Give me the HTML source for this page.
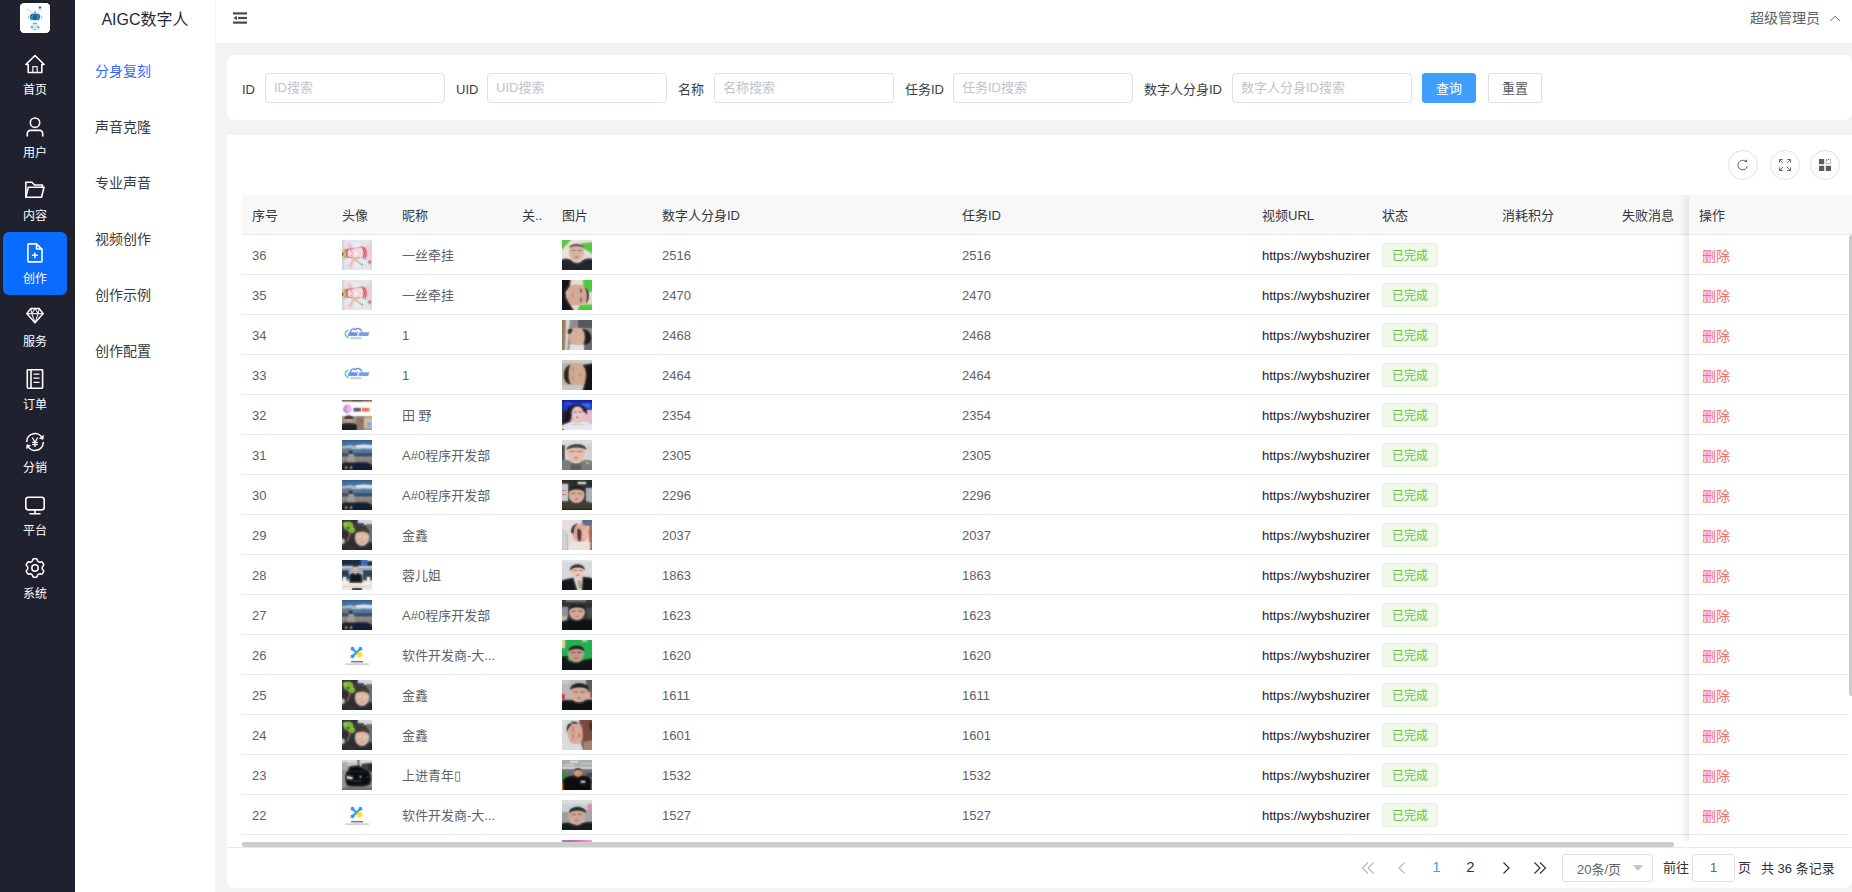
<!DOCTYPE html>
<html lang="zh-CN"><head><meta charset="utf-8"><title>AIGC数字人</title>
<style>
*{box-sizing:border-box;margin:0;padding:0}
html,body{width:1852px;height:892px;overflow:hidden;background:#f2f3f5;font-family:"Liberation Sans","Noto Sans CJK SC",sans-serif;font-size:13px;color:#606266}
body{position:relative}
.side{position:absolute;left:0;top:0;width:75px;height:892px;background:#1f222e}
.logo{position:absolute;left:20px;top:3px;width:30px;height:30px;background:#fff;border-radius:4.500px;overflow:hidden}
.logo svg{display:block}
.nav{position:absolute;left:3px;width:64px;height:63px;border-radius:6px;color:#fff;text-align:center}
.nav.act{background:#0a6cff}
.nav svg{position:absolute;left:22px;top:11px;width:20px;height:20px}
.nav span{position:absolute;left:0;width:64px;top:38px;font-size:12px;line-height:18px;color:#fff}
.sub{position:absolute;left:75px;top:0;width:141px;height:892px;background:#fff;border-right:1px solid #f2f3f5}
.subtitle{position:absolute;left:0;top:0;width:140px;height:40px;line-height:40px;text-align:center;font-size:16px;color:#1d2939}
.subitem{position:absolute;left:20px;width:120px;height:56px;line-height:56px;font-size:14px;color:#393b40}
.subitem.on{color:#3366ff}
.head{position:absolute;left:216px;top:0;width:1636px;height:43px;background:#fff}
.head>svg{position:absolute;left:17px;top:11px;width:14px;height:14px}
.user{position:absolute;right:32px;top:0;height:36px;line-height:36px;font-size:14px;color:#5c5e63}
.user svg{position:absolute;left:80px;top:12px;width:12px;height:12px}
.search{position:absolute;left:227px;top:55px;width:1625px;height:65px;background:#fff;border-radius:8px}
.search label{position:absolute;top:19px;height:32px;line-height:32px;font-size:13px;color:#3c3e42;white-space:nowrap}
.inp{position:absolute;top:18px;width:180px;height:30px;border:1px solid #dcdfe6;border-radius:4px;background:#fff}
.inp span{position:absolute;left:8px;top:0;line-height:28px;font-size:13px;color:#c0c4cc;white-space:nowrap}
.btn{position:absolute;top:18px;width:54px;height:30px;border:1px solid #dcdfe6;border-radius:3px;background:#fff;color:#5a5c61;font-size:13px;line-height:30px;text-align:center}
.btn.pri{background:#409eff;border-color:#409eff;color:#fff}
.card{position:absolute;left:227px;top:135px;width:1625px;height:753px;background:#fff;border-radius:0 0 8px 8px;overflow:hidden}
.tool{position:absolute;top:15px;width:30px;height:30px;border:1px solid #dcdfe6;border-radius:50%}
.tool svg{position:absolute;left:8px;top:8px;width:12px;height:12px}
.tbl{position:absolute;left:15px;top:60px;width:1618px;height:647px;overflow:hidden}
.thead{position:absolute;left:0;top:0;width:1618px;height:40px;background:#f8f8f9;border-bottom:1px solid #e6e9ee}
.thead span{position:absolute;top:1px;line-height:39px;font-size:13px;color:#34363a;white-space:nowrap}
.tr{position:absolute;left:0;width:1618px;height:40px;border-bottom:1px solid #e6e9ee}
.tr .c{position:absolute;top:1px;line-height:40px;font-size:13px;color:#606266;white-space:nowrap}
.tr .url{width:108px;overflow:hidden;color:#17171f}
.th{position:absolute;top:5px;width:30px;height:30px;overflow:hidden}
.th svg{display:block;width:30px;height:30px}
.tag{position:absolute;top:8px;width:56px;height:24px;line-height:25px;border:1px solid #e1f3d8;background:#f0f9eb;border-radius:3px;color:#67c23a;font-size:12px;text-align:center}
.fix{position:absolute;left:1462px;top:60px;width:171px;height:647px;background:#fff;box-shadow:-2px 0 9px rgba(0,0,0,.13);clip-path:inset(0 0 0 -14px)}
.fhead{position:absolute;left:0;top:0;width:171px;height:40px;background:#f8f8f9;border-bottom:1px solid #e6e9ee;line-height:41px;padding-left:10px;font-size:13px;color:#34363a}
.fr{position:absolute;left:0;width:160px;height:40px;border-bottom:1px solid #e6e9ee}
.fr span{position:absolute;left:13px;top:0;line-height:42px;font-size:14px;color:#f56c6c}
.vbar{position:absolute;left:1622px;top:100px;width:6px;height:461px;background:#cbcbcb;border-radius:3px}
.hbar{position:absolute;left:0;top:706px;width:1625px;height:7px;border-bottom:1px solid #e6e9ee}
.hbar i{position:absolute;left:15px;top:1px;width:1432px;height:5px;background:#cccccc;border-radius:3px}
.pager{position:absolute;left:0;top:714px;width:1633px;height:39px}
.pg{position:absolute;top:5px;width:17px;height:28px;line-height:26px;font-size:15px;color:#303133;text-align:center}
.pg.cur{color:#409eff}
.pg.ico svg{position:absolute;left:2px;top:7px;width:14px;height:14px;stroke:#b4b7bd}
.pg.ico.dk svg{stroke:#303133}
.sel{position:absolute;top:5px;width:91px;height:28px;border:1px solid #dcdfe6;border-radius:3px}
.sel span{position:absolute;left:14px;top:1px;line-height:28px;font-size:13px;color:#606266}
.sel b{position:absolute;left:70px;top:10px;width:0;height:0;border:5px solid transparent;border-top:6px solid #c0c4cc}
.pt{position:absolute;top:5px;line-height:28px;font-size:13px;color:#303133;white-space:nowrap}
.jump{position:absolute;top:5px;width:43px;height:28px;border:1px solid #dcdfe6;border-radius:3px;text-align:center;line-height:25px;font-size:13px;color:#606266}

</style></head><body>
<svg width="0" height="0" style="position:absolute"><defs><filter id="bl" x="-20%" y="-20%" width="140%" height="140%"><feGaussianBlur stdDeviation="0.85"/></filter><filter id="bl2" x="-20%" y="-20%" width="140%" height="140%"><feGaussianBlur stdDeviation="0.3"/></filter></defs></svg>
<div class="side">
<div class="logo"><svg viewBox="0 0 30 30" width="30" height="30"><rect width="30" height="30" fill="#ffffff"/><g filter="url(#bl2)"><path d="M7.500 6.300 10.800 8.700" stroke="#a8cde8" stroke-width="1" fill="none" stroke-linecap="round"/><path d="M18.600 8.500 19.700 5.500" stroke="#b8dcec" stroke-width=".8" fill="none"/><path d="M18.800 7.600h3.800" stroke="#c4e4f0" stroke-width=".8" fill="none"/><circle cx="20" cy="4.500" r="1.700" fill="#bfeaf2"/><circle cx="20" cy="4.600" r="1.100" fill="#2a4f96"/><rect x="9.300" y="9.600" width="11.400" height="8.600" rx="3.800" fill="#d4ecf3"/><circle cx="15" cy="9.300" r="1.150" fill="#2ec4d8"/><rect x="8" y="12.600" width="1" height="3" rx=".5" fill="#7ad8e8"/><rect x="21" y="12.600" width="1" height="3" rx=".5" fill="#7ad8e8"/><rect x="10.100" y="10.800" width="9.800" height="6.200" rx="2.800" fill="#275889"/><rect x="12.200" y="10.900" width="5.600" height="1.400" rx=".7" fill="#3c62a4"/><path d="M13.300 12.800h-1.400v3h1.400M16.700 12.800h1.400v3h-1.400" stroke="#3acbdc" stroke-width=".8" fill="none"/><ellipse cx="15" cy="18.400" rx="1.400" ry=".7" fill="#d8eef4"/><ellipse cx="15" cy="22.600" rx="3.700" ry="3.200" fill="#cfeaf2"/><rect x="13" y="19.800" width="4" height="1.300" rx=".6" fill="#74acc8"/><circle cx="11.800" cy="24.300" r="1.200" fill="#39bfd0"/><circle cx="18.300" cy="24.300" r="1.200" fill="#39bfd0"/><ellipse cx="15" cy="26.500" rx="1.300" ry=".75" fill="#33c4d6"/></g></svg></div>
<div class="nav" style="top:43px"><svg viewBox="0 0 20 20" fill="none" stroke="#fff" stroke-width="1.6" stroke-linecap="round" stroke-linejoin="round"><path d="M10 1.500 0.9 10.500H3.200V18.500H16.800V10.500H19.100z"/><path d="M7.800 18.500V12.600h4.400v5.900" stroke-width="1.300" stroke="#e4e5e8"/></svg><span>首页</span></div>
<div class="nav" style="top:106px"><svg viewBox="0 0 20 20" fill="none" stroke="#fff" stroke-width="1.6" stroke-linecap="round" stroke-linejoin="round"><circle cx="10" cy="5.700" r="4.700"/><path d="M2.300 19v-2.600a3 3 0 0 1 3-3h9.400a3 3 0 0 1 3 3V19"/></svg><span>用户</span></div>
<div class="nav" style="top:169px"><svg viewBox="0 0 20 20" fill="none" stroke="#fff" stroke-width="1.6" stroke-linecap="round" stroke-linejoin="round"><path d="M0.800 17.300V2.200H7L9.500 5h8V7.200"/><path d="M0.800 17.300 3.300 7.200H19L16.500 17.300z"/></svg><span>内容</span></div>
<div class="nav act" style="top:232px"><svg viewBox="0 0 20 20" fill="none" stroke="#fff" stroke-width="1.6" stroke-linecap="round" stroke-linejoin="round"><path d="M3.800 0.900h7.600L17 6.300V18a.9.9 0 0 1-.9.900H3.800a.9.900 0 0 1-.9-.9V1.800a.9.900 0 0 1 .9-.9z"/><path d="M11.500 1V6h5.300"/><path d="M9.900 9.900v4.800M7.500 12.300h4.800" stroke-width="1.400"/></svg><span>创作</span></div>
<div class="nav" style="top:295px"><svg viewBox="0 0 20 20" fill="none" stroke="#fff" stroke-width="1.2" stroke-linecap="round" stroke-linejoin="round"><path d="M5.900 2.500h8.200L18.200 7.600 10 16.800 1.800 7.600z" stroke-width="1.500"/><path d="M1.800 7.600h16.400M6.800 7.600 10 16.800 13.200 7.600M5.900 2.500 6.800 7.600 10 2.500 13.200 7.600 14.100 2.500" stroke-width="1.100" opacity=".88"/></svg><span>服务</span></div>
<div class="nav" style="top:358px"><svg viewBox="0 0 20 20" fill="none" stroke="#fff" stroke-width="1.6" stroke-linecap="round" stroke-linejoin="round"><rect x="2.300" y="0.700" width="15.300" height="18.500" rx="1"/><path d="M6 0.700V19.200"/><path d="M9 5.100h5M9 9.200h5M9 13.400h5" stroke-width="1.300"/></svg><span>订单</span></div>
<div class="nav" style="top:421px"><svg viewBox="0 0 20 20" fill="none" stroke="#fff" stroke-width="1.6" stroke-linecap="round" stroke-linejoin="round"><path d="M1.700 9.500A8.300 8.300 0 0 1 17.700 6.800"/><path d="M18.300 10.500A8.300 8.300 0 0 1 2.300 13.200"/><path d="M18.400 3.800 17.900 7 14.900 6.500z" fill="#fff" stroke-width=".8"/><path d="M1.600 16.200 2.100 13 5.100 13.500z" fill="#fff" stroke-width=".8"/><path d="M7.500 6 10 10 12.500 6M10 10v4.500M7.700 10.500h4.600M7.700 12.600h4.600" stroke-width="1.300"/></svg><span>分销</span></div>
<div class="nav" style="top:484px"><svg viewBox="0 0 20 20" fill="none" stroke="#fff" stroke-width="1.6" stroke-linecap="round" stroke-linejoin="round"><rect x="0.800" y="2.200" width="18.400" height="12.700" rx="2.600"/><path d="M10 15v3.700M5 18.800h10"/></svg><span>平台</span></div>
<div class="nav" style="top:547px"><svg viewBox="0 0 20 20" fill="none" stroke="#fff" stroke-width="1.5" stroke-linecap="round" stroke-linejoin="round"><circle cx="10" cy="10" r="3.200"/><path d="M17.24 10.00 17.24 9.68 17.24 9.37 17.29 9.04 17.47 8.68 17.90 8.25 18.44 7.74 18.69 7.26 18.68 6.84 18.57 6.45 18.42 6.07 18.24 5.71 18.05 5.35 17.84 5.01 17.61 4.67 17.36 4.35 17.08 4.06 16.71 3.85 16.18 3.82 15.47 4.03 14.87 4.19 14.48 4.17 14.17 4.04 13.89 3.89 13.62 3.73 13.35 3.57 13.07 3.41 12.81 3.21 12.59 2.87 12.43 2.28 12.26 1.56 11.97 1.11 11.60 0.90 11.21 0.80 10.81 0.75 10.41 0.71 10.00 0.71 9.59 0.71 9.19 0.75 8.79 0.80 8.40 0.90 8.03 1.11 7.74 1.56 7.57 2.28 7.41 2.87 7.19 3.21 6.93 3.41 6.65 3.57 6.38 3.73 6.11 3.89 5.83 4.04 5.52 4.17 5.13 4.19 4.53 4.03 3.82 3.82 3.29 3.85 2.92 4.06 2.64 4.35 2.39 4.67 2.16 5.01 1.95 5.35 1.76 5.71 1.58 6.07 1.43 6.45 1.32 6.84 1.31 7.26 1.56 7.74 2.10 8.25 2.53 8.68 2.71 9.04 2.76 9.37 2.76 9.68 2.76 10.00 2.76 10.32 2.76 10.63 2.71 10.96 2.53 11.32 2.10 11.75 1.56 12.26 1.31 12.74 1.32 13.16 1.43 13.55 1.58 13.93 1.76 14.29 1.95 14.65 2.16 14.99 2.39 15.33 2.64 15.65 2.92 15.94 3.29 16.15 3.82 16.18 4.53 15.97 5.13 15.81 5.52 15.83 5.83 15.96 6.11 16.11 6.38 16.27 6.65 16.43 6.93 16.59 7.19 16.79 7.41 17.13 7.57 17.72 7.74 18.44 8.03 18.89 8.40 19.10 8.79 19.20 9.19 19.25 9.59 19.29 10.00 19.29 10.41 19.29 10.81 19.25 11.21 19.20 11.60 19.10 11.97 18.89 12.26 18.44 12.43 17.72 12.59 17.13 12.81 16.79 13.07 16.59 13.35 16.43 13.62 16.27 13.89 16.11 14.17 15.96 14.48 15.83 14.87 15.81 15.47 15.97 16.18 16.18 16.71 16.15 17.08 15.94 17.36 15.65 17.61 15.33 17.84 14.99 18.05 14.65 18.24 14.29 18.42 13.93 18.57 13.55 18.68 13.16 18.69 12.74 18.44 12.26 17.90 11.75 17.47 11.32 17.29 10.96 17.24 10.63 17.24 10.32z"/></svg><span>系统</span></div>
</div>
<div class="sub"><div class="subtitle">AIGC数字人</div>
<div class="subitem on" style="top:43px">分身复刻</div>
<div class="subitem" style="top:99px">声音克隆</div>
<div class="subitem" style="top:155px">专业声音</div>
<div class="subitem" style="top:211px">视频创作</div>
<div class="subitem" style="top:267px">创作示例</div>
<div class="subitem" style="top:323px">创作配置</div>
</div>
<div class="head"><svg viewBox="0 0 14 14" fill="#4a4a4a" stroke="none"><rect x="0" y="1.300" width="14" height="2.200"/><rect x="5" y="5.900" width="9" height="2.200"/><rect x="0" y="10.500" width="14" height="2.200"/><path d="M0.400 7 3.900 4.700V9.300z"/></svg><div class="user">超级管理员<svg viewBox="0 0 12 12" fill="none" stroke="#606266" stroke-width="1"><path d="M0.400 8.900 5.100 4.200 9.800 8.900"/></svg></div></div>
<div class="search">
<label style="left:15px">ID</label><div class="inp" style="left:38px"><span>ID搜索</span></div>
<label style="left:229px">UID</label><div class="inp" style="left:260px"><span>UID搜索</span></div>
<label style="left:451px">名称</label><div class="inp" style="left:487px"><span>名称搜索</span></div>
<label style="left:678px">任务ID</label><div class="inp" style="left:726px"><span>任务ID搜索</span></div>
<label style="left:917px">数字人分身ID</label><div class="inp" style="left:1005px"><span>数字人分身ID搜索</span></div>
<div class="btn pri" style="left:1195px">查询</div><div class="btn" style="left:1261px">重置</div>
</div>
<div class="card">
<div class="tool" style="left:1501px"><svg viewBox="0 0 12 12" fill="none" stroke="#606266" stroke-width="1"><path d="M10.400 7.200A4.800 4.800 0 1 1 8.600 2.200"/><path d="M7.300 2.800 10.300 3.200 10.100 0.300z" fill="#606266" stroke="none"/></svg></div>
<div class="tool" style="left:1543px"><svg viewBox="0 0 12 12" fill="none" stroke="#606266" stroke-width="1"><path d="M.4 3.600V.5h3.200M.6.700 4 4.100M8.400.5h3.200v3.100M11.400.7 8 4.100M.4 8.400v3.100h3.200M.6 11.300 4 7.900M11.600 8.400v3.100H8.400M11.400 11.300 8 7.900"/></svg></div>
<div class="tool" style="left:1583px"><svg viewBox="0 0 12 12" fill="#5a5c61" stroke="none"><rect x="0" y="0" width="5.200" height="5.200"/><rect x="0" y="6.800" width="5.200" height="5.200"/><rect x="6.800" y="6.800" width="5.200" height="5.200"/><rect x="7.300" y=".5" width="4.200" height="4.200" fill="none" stroke="#6a6c8a" stroke-width=".9" stroke-dasharray="1 .7"/></svg></div>
<div class="tbl">
<div class="thead">
<span style="left:10px">序号</span>
<span style="left:100px">头像</span>
<span style="left:160px">昵称</span>
<span style="left:280px">关..</span>
<span style="left:320px">图片</span>
<span style="left:420px">数字人分身ID</span>
<span style="left:720px">任务ID</span>
<span style="left:1020px">视频URL</span>
<span style="left:1140px">状态</span>
<span style="left:1260px">消耗积分</span>
<span style="left:1380px">失败消息</span>
</div>
<div class="tr" style="top:40px">
<span class="c" style="left:10px">36</span>
<div class="th" style="left:100px"><svg viewBox="0 0 30 30"><g filter="url(#bl)"><rect x="-4" y="-4" width="38" height="38" fill="#e4e6ec"/><rect x="-2" y="-2" width="4" height="34" fill="#d0d4de" /><rect x="28" y="-2" width="4" height="34" fill="#d4d8e2" /><ellipse cx="15" cy="15" rx="11" ry="12" fill="#eceef2" /><path d="M5 3.500 8 2.300 11.500 8.500 8.500 10z" fill="#eec0cc" /><path d="M5.500 26.500 9.500 28 13.500 20 10 18.500z" fill="#eec0cc" /><ellipse cx="24.5" cy="12.5" rx="4.5" ry="5.2" fill="#efcbd4" /><ellipse cx="26" cy="7" rx="2.8" ry="2.2" fill="#f0d0d8" /><ellipse cx="3" cy="13.5" rx="3.2" ry="5.6" fill="#d8ca88" /><ellipse cx="0.5" cy="14" rx="1" ry="1.7" fill="#3a2a22" /><ellipse cx="3.8" cy="10.5" rx="1.2" ry="1" fill="#d04040" /><ellipse cx="3" cy="17" rx="1" ry="1" fill="#60b060" /><rect x="8.2" y="9" width="11" height="9.5" fill="#f3d6de" rx="2.500"/><ellipse cx="13.5" cy="13.5" rx="3" ry="2.5" fill="#f9eaef" /><path d="M6 9.300C4.200 11 4.200 15.500 6 17.300" fill="none" stroke="#d42a3a" stroke-width="1.5" stroke-linecap="round" /><path d="M6 9.300 12 8.300" fill="none" stroke="#d8485a" stroke-width="1" stroke-linecap="round" /><path d="M14 8 19 7.300" fill="none" stroke="#d86070" stroke-width="0.8" stroke-linecap="round" /><path d="M6 17.300 11 17.600" fill="none" stroke="#d8485a" stroke-width="1" stroke-linecap="round" /><path d="M14 17.800 18.500 17.800" fill="none" stroke="#d86070" stroke-width="0.8" stroke-linecap="round" /><path d="M19.500 6.800C22.500 9 23 14 21 18M22 7.500C24.500 10 24.500 14.500 23.300 17.500" fill="none" stroke="#cc2434" stroke-width="1.3" stroke-linecap="round" /><path d="M8 9.500 10 12M9 16 10.500 14" fill="none" stroke="#d04050" stroke-width="0.8" stroke-linecap="round" /><path d="M12 18.500 18.500 23.800" fill="none" stroke="#b8b850" stroke-width="1.3" stroke-linecap="round" /><path d="M13 19 17 22" fill="none" stroke="#d8c040" stroke-width="1" stroke-linecap="round" /><ellipse cx="19.8" cy="24.3" rx="1" ry="0.9" fill="#3a70d0" /><ellipse cx="26" cy="19.2" rx="1" ry="1.4" fill="#e8e060" /><ellipse cx="27.6" cy="22" rx="1.1" ry="1.7" fill="#cc1828" /><ellipse cx="23.3" cy="19" rx="1" ry="0.8" fill="#3a80d0" /></g><g opacity="0.4"><rect x="-4" y="-4" width="38" height="38" fill="#e4e6ec"/><rect x="-2" y="-2" width="4" height="34" fill="#d0d4de" /><rect x="28" y="-2" width="4" height="34" fill="#d4d8e2" /><ellipse cx="15" cy="15" rx="11" ry="12" fill="#eceef2" /><path d="M5 3.500 8 2.300 11.500 8.500 8.500 10z" fill="#eec0cc" /><path d="M5.500 26.500 9.500 28 13.500 20 10 18.500z" fill="#eec0cc" /><ellipse cx="24.5" cy="12.5" rx="4.5" ry="5.2" fill="#efcbd4" /><ellipse cx="26" cy="7" rx="2.8" ry="2.2" fill="#f0d0d8" /><ellipse cx="3" cy="13.5" rx="3.2" ry="5.6" fill="#d8ca88" /><ellipse cx="0.5" cy="14" rx="1" ry="1.7" fill="#3a2a22" /><ellipse cx="3.8" cy="10.5" rx="1.2" ry="1" fill="#d04040" /><ellipse cx="3" cy="17" rx="1" ry="1" fill="#60b060" /><rect x="8.2" y="9" width="11" height="9.5" fill="#f3d6de" rx="2.500"/><ellipse cx="13.5" cy="13.5" rx="3" ry="2.5" fill="#f9eaef" /><path d="M6 9.300C4.200 11 4.200 15.500 6 17.300" fill="none" stroke="#d42a3a" stroke-width="1.5" stroke-linecap="round" /><path d="M6 9.300 12 8.300" fill="none" stroke="#d8485a" stroke-width="1" stroke-linecap="round" /><path d="M14 8 19 7.300" fill="none" stroke="#d86070" stroke-width="0.8" stroke-linecap="round" /><path d="M6 17.300 11 17.600" fill="none" stroke="#d8485a" stroke-width="1" stroke-linecap="round" /><path d="M14 17.800 18.500 17.800" fill="none" stroke="#d86070" stroke-width="0.8" stroke-linecap="round" /><path d="M19.500 6.800C22.500 9 23 14 21 18M22 7.500C24.500 10 24.500 14.500 23.300 17.500" fill="none" stroke="#cc2434" stroke-width="1.3" stroke-linecap="round" /><path d="M8 9.500 10 12M9 16 10.500 14" fill="none" stroke="#d04050" stroke-width="0.8" stroke-linecap="round" /><path d="M12 18.500 18.500 23.800" fill="none" stroke="#b8b850" stroke-width="1.3" stroke-linecap="round" /><path d="M13 19 17 22" fill="none" stroke="#d8c040" stroke-width="1" stroke-linecap="round" /><ellipse cx="19.8" cy="24.3" rx="1" ry="0.9" fill="#3a70d0" /><ellipse cx="26" cy="19.2" rx="1" ry="1.4" fill="#e8e060" /><ellipse cx="27.6" cy="22" rx="1.1" ry="1.7" fill="#cc1828" /><ellipse cx="23.3" cy="19" rx="1" ry="0.8" fill="#3a80d0" /></g></svg></div>
<span class="c" style="left:160px">一丝牵挂</span>
<div class="th" style="left:320px"><svg viewBox="0 0 30 30"><g filter="url(#bl)"><rect x="-4" y="-4" width="38" height="38" fill="#ebe3db"/><path d="M-2 -2H11L-2 12z" fill="#58c842" /><path d="M19 3 32 2V15L22 9z" fill="#58c842" /><rect x="20" y="14" width="12" height="3" fill="#e8d8d0" /><ellipse cx="14.5" cy="12" rx="7.6" ry="9" fill="#d9b3a2" /><path d="M7 8C7 2.500 22 2.500 22.300 8 19 5.500 10 5.500 7 8z" fill="#4b4745" /><path d="M10 10.500h3.500M16 10.500h3.500" fill="none" stroke="#5a4a46" stroke-width="0.8" stroke-linecap="round" /><ellipse cx="14.5" cy="17.3" rx="1.8" ry="0.7" fill="#b84848" /><path d="M-2 32V20C3 17.500 8 18.500 10 20.500 13 23.500 17 23.500 20 20.500 23 18 28 17.500 32 19V32z" fill="#23272b" /></g><g opacity="0.4"><rect x="-4" y="-4" width="38" height="38" fill="#ebe3db"/><path d="M-2 -2H11L-2 12z" fill="#58c842" /><path d="M19 3 32 2V15L22 9z" fill="#58c842" /><rect x="20" y="14" width="12" height="3" fill="#e8d8d0" /><ellipse cx="14.5" cy="12" rx="7.6" ry="9" fill="#d9b3a2" /><path d="M7 8C7 2.500 22 2.500 22.300 8 19 5.500 10 5.500 7 8z" fill="#4b4745" /><path d="M10 10.500h3.500M16 10.500h3.500" fill="none" stroke="#5a4a46" stroke-width="0.8" stroke-linecap="round" /><ellipse cx="14.5" cy="17.3" rx="1.8" ry="0.7" fill="#b84848" /><path d="M-2 32V20C3 17.500 8 18.500 10 20.500 13 23.500 17 23.500 20 20.500 23 18 28 17.500 32 19V32z" fill="#23272b" /></g></svg></div>
<span class="c" style="left:420px">2516</span><span class="c" style="left:720px">2516</span>
<span class="c url" style="left:1020px">https://wybshuzirenxm</span>
<span class="tag" style="left:1140px">已完成</span>
</div>
<div class="tr" style="top:80px">
<span class="c" style="left:10px">35</span>
<div class="th" style="left:100px"><svg viewBox="0 0 30 30"><g filter="url(#bl)"><rect x="-4" y="-4" width="38" height="38" fill="#e4e6ec"/><rect x="-2" y="-2" width="4" height="34" fill="#d0d4de" /><rect x="28" y="-2" width="4" height="34" fill="#d4d8e2" /><ellipse cx="15" cy="15" rx="11" ry="12" fill="#eceef2" /><path d="M5 3.500 8 2.300 11.500 8.500 8.500 10z" fill="#eec0cc" /><path d="M5.500 26.500 9.500 28 13.500 20 10 18.500z" fill="#eec0cc" /><ellipse cx="24.5" cy="12.5" rx="4.5" ry="5.2" fill="#efcbd4" /><ellipse cx="26" cy="7" rx="2.8" ry="2.2" fill="#f0d0d8" /><ellipse cx="3" cy="13.5" rx="3.2" ry="5.6" fill="#d8ca88" /><ellipse cx="0.5" cy="14" rx="1" ry="1.7" fill="#3a2a22" /><ellipse cx="3.8" cy="10.5" rx="1.2" ry="1" fill="#d04040" /><ellipse cx="3" cy="17" rx="1" ry="1" fill="#60b060" /><rect x="8.2" y="9" width="11" height="9.5" fill="#f3d6de" rx="2.500"/><ellipse cx="13.5" cy="13.5" rx="3" ry="2.5" fill="#f9eaef" /><path d="M6 9.300C4.200 11 4.200 15.500 6 17.300" fill="none" stroke="#d42a3a" stroke-width="1.5" stroke-linecap="round" /><path d="M6 9.300 12 8.300" fill="none" stroke="#d8485a" stroke-width="1" stroke-linecap="round" /><path d="M14 8 19 7.300" fill="none" stroke="#d86070" stroke-width="0.8" stroke-linecap="round" /><path d="M6 17.300 11 17.600" fill="none" stroke="#d8485a" stroke-width="1" stroke-linecap="round" /><path d="M14 17.800 18.500 17.800" fill="none" stroke="#d86070" stroke-width="0.8" stroke-linecap="round" /><path d="M19.500 6.800C22.500 9 23 14 21 18M22 7.500C24.500 10 24.500 14.500 23.300 17.500" fill="none" stroke="#cc2434" stroke-width="1.3" stroke-linecap="round" /><path d="M8 9.500 10 12M9 16 10.500 14" fill="none" stroke="#d04050" stroke-width="0.8" stroke-linecap="round" /><path d="M12 18.500 18.500 23.800" fill="none" stroke="#b8b850" stroke-width="1.3" stroke-linecap="round" /><path d="M13 19 17 22" fill="none" stroke="#d8c040" stroke-width="1" stroke-linecap="round" /><ellipse cx="19.8" cy="24.3" rx="1" ry="0.9" fill="#3a70d0" /><ellipse cx="26" cy="19.2" rx="1" ry="1.4" fill="#e8e060" /><ellipse cx="27.6" cy="22" rx="1.1" ry="1.7" fill="#cc1828" /><ellipse cx="23.3" cy="19" rx="1" ry="0.8" fill="#3a80d0" /></g><g opacity="0.4"><rect x="-4" y="-4" width="38" height="38" fill="#e4e6ec"/><rect x="-2" y="-2" width="4" height="34" fill="#d0d4de" /><rect x="28" y="-2" width="4" height="34" fill="#d4d8e2" /><ellipse cx="15" cy="15" rx="11" ry="12" fill="#eceef2" /><path d="M5 3.500 8 2.300 11.500 8.500 8.500 10z" fill="#eec0cc" /><path d="M5.500 26.500 9.500 28 13.500 20 10 18.500z" fill="#eec0cc" /><ellipse cx="24.5" cy="12.5" rx="4.5" ry="5.2" fill="#efcbd4" /><ellipse cx="26" cy="7" rx="2.8" ry="2.2" fill="#f0d0d8" /><ellipse cx="3" cy="13.5" rx="3.2" ry="5.6" fill="#d8ca88" /><ellipse cx="0.5" cy="14" rx="1" ry="1.7" fill="#3a2a22" /><ellipse cx="3.8" cy="10.5" rx="1.2" ry="1" fill="#d04040" /><ellipse cx="3" cy="17" rx="1" ry="1" fill="#60b060" /><rect x="8.2" y="9" width="11" height="9.5" fill="#f3d6de" rx="2.500"/><ellipse cx="13.5" cy="13.5" rx="3" ry="2.5" fill="#f9eaef" /><path d="M6 9.300C4.200 11 4.200 15.500 6 17.300" fill="none" stroke="#d42a3a" stroke-width="1.5" stroke-linecap="round" /><path d="M6 9.300 12 8.300" fill="none" stroke="#d8485a" stroke-width="1" stroke-linecap="round" /><path d="M14 8 19 7.300" fill="none" stroke="#d86070" stroke-width="0.8" stroke-linecap="round" /><path d="M6 17.300 11 17.600" fill="none" stroke="#d8485a" stroke-width="1" stroke-linecap="round" /><path d="M14 17.800 18.500 17.800" fill="none" stroke="#d86070" stroke-width="0.8" stroke-linecap="round" /><path d="M19.500 6.800C22.500 9 23 14 21 18M22 7.500C24.500 10 24.500 14.500 23.300 17.500" fill="none" stroke="#cc2434" stroke-width="1.3" stroke-linecap="round" /><path d="M8 9.500 10 12M9 16 10.500 14" fill="none" stroke="#d04050" stroke-width="0.8" stroke-linecap="round" /><path d="M12 18.500 18.500 23.800" fill="none" stroke="#b8b850" stroke-width="1.3" stroke-linecap="round" /><path d="M13 19 17 22" fill="none" stroke="#d8c040" stroke-width="1" stroke-linecap="round" /><ellipse cx="19.8" cy="24.3" rx="1" ry="0.9" fill="#3a70d0" /><ellipse cx="26" cy="19.2" rx="1" ry="1.4" fill="#e8e060" /><ellipse cx="27.6" cy="22" rx="1.1" ry="1.7" fill="#cc1828" /><ellipse cx="23.3" cy="19" rx="1" ry="0.8" fill="#3a80d0" /></g></svg></div>
<span class="c" style="left:160px">一丝牵挂</span>
<div class="th" style="left:320px"><svg viewBox="0 0 30 30"><g filter="url(#bl)"><rect x="-4" y="-4" width="38" height="38" fill="#e6ddd6"/><rect x="21" y="-2" width="11" height="14" fill="#4dc93d" /><path d="M14 32 18 25 32 24V32z" fill="#4dc93d" /><path d="M-2 -2H9L8 6 4 12 4.500 18 8 24 13 32H-2z" fill="#15181c" /><path d="M8 6C12 3.500 20 4 24 8 26 12 26 18 24 22 20 26 12 26.500 8 24 4.500 20 4.500 10 8 6z" fill="#d6aa95" /><path d="M22.500 7.500C28 9 29 20 23.500 24.500 25.500 19 25.500 12 22.500 7.500z" fill="#2a2422" /><path d="M19 9v3.500M19 18v3.500" fill="none" stroke="#2a2220" stroke-width="1.1" stroke-linecap="round" /><ellipse cx="10.5" cy="15.5" rx="0.7" ry="1.8" fill="#c07080" /></g><g opacity="0.4"><rect x="-4" y="-4" width="38" height="38" fill="#e6ddd6"/><rect x="21" y="-2" width="11" height="14" fill="#4dc93d" /><path d="M14 32 18 25 32 24V32z" fill="#4dc93d" /><path d="M-2 -2H9L8 6 4 12 4.500 18 8 24 13 32H-2z" fill="#15181c" /><path d="M8 6C12 3.500 20 4 24 8 26 12 26 18 24 22 20 26 12 26.500 8 24 4.500 20 4.500 10 8 6z" fill="#d6aa95" /><path d="M22.500 7.500C28 9 29 20 23.500 24.500 25.500 19 25.500 12 22.500 7.500z" fill="#2a2422" /><path d="M19 9v3.500M19 18v3.500" fill="none" stroke="#2a2220" stroke-width="1.1" stroke-linecap="round" /><ellipse cx="10.5" cy="15.5" rx="0.7" ry="1.8" fill="#c07080" /></g></svg></div>
<span class="c" style="left:420px">2470</span><span class="c" style="left:720px">2470</span>
<span class="c url" style="left:1020px">https://wybshuzirenxm</span>
<span class="tag" style="left:1140px">已完成</span>
</div>
<div class="tr" style="top:120px">
<span class="c" style="left:10px">34</span>
<div class="th" style="left:100px"><svg viewBox="0 0 30 30"><g filter="url(#bl)"><rect x="-4" y="-4" width="38" height="38" fill="#ffffff"/><path d="M8.500 12.300C8.300 9.500 11.300 8 13.500 9.700 15 7.600 18.800 8.300 19.600 11.200" fill="none" stroke="#3d7be0" stroke-width="1.2" stroke-linecap="round" /><path d="M6 10.300C2.300 11.800 2.300 16.200 6.500 17.600" fill="none" stroke="#3fcf7c" stroke-width="1.3" stroke-linecap="round" /><path d="M6.800 12.200H16L15 16H5.800z" fill="#4a7ae6" opacity=".85"/><path d="M17.300 12.200H27.300L26.300 16H16.300z" fill="#4a7ae6" opacity=".8"/><rect x="8.5" y="17.6" width="11" height="1.1" fill="#86a6ec" /></g><g opacity="0.75"><rect x="-4" y="-4" width="38" height="38" fill="#ffffff"/><path d="M8.500 12.300C8.300 9.500 11.300 8 13.500 9.700 15 7.600 18.800 8.300 19.600 11.200" fill="none" stroke="#3d7be0" stroke-width="1.2" stroke-linecap="round" /><path d="M6 10.300C2.300 11.800 2.300 16.200 6.500 17.600" fill="none" stroke="#3fcf7c" stroke-width="1.3" stroke-linecap="round" /><path d="M6.800 12.200H16L15 16H5.800z" fill="#4a7ae6" opacity=".85"/><path d="M17.300 12.200H27.300L26.300 16H16.300z" fill="#4a7ae6" opacity=".8"/><rect x="8.5" y="17.6" width="11" height="1.1" fill="#86a6ec" /></g></svg></div>
<span class="c" style="left:160px">1</span>
<div class="th" style="left:320px"><svg viewBox="0 0 30 30"><g filter="url(#bl)"><rect x="-4" y="-4" width="38" height="38" fill="#8f8f8d"/><rect x="16" y="-2" width="16" height="10" fill="#55585a" /><rect x="-2" y="-2" width="6" height="34" fill="#9b7b5b" /><path d="M4 -2H8L5 32H3z" fill="#d9dcdc" /><path d="M8 24H23V32H7z" fill="#dfe3e6" /><rect x="22" y="22" width="10" height="10" fill="#6a6c6e" /><path d="M9 10C12 7 19 7 22 10 24 14 24 20 21 24 17 26 11 25.500 9 23 6.500 19 6.500 13 9 10z" fill="#d8b09a" /><path d="M20 9C27 8.500 30 14 29.500 19 29 23 25 25.500 21 24.500 23.500 20 23.500 13 20 9z" fill="#1c1a1a" /><path d="M6 9.500C8 8 10.500 8.500 10.500 10.500L8 14.500 5.500 13z" fill="#1c1a1a" /><path d="M14 10v13" fill="none" stroke="#b9b0a8" stroke-width="0.6" stroke-linecap="round" /></g><g opacity="0.4"><rect x="-4" y="-4" width="38" height="38" fill="#8f8f8d"/><rect x="16" y="-2" width="16" height="10" fill="#55585a" /><rect x="-2" y="-2" width="6" height="34" fill="#9b7b5b" /><path d="M4 -2H8L5 32H3z" fill="#d9dcdc" /><path d="M8 24H23V32H7z" fill="#dfe3e6" /><rect x="22" y="22" width="10" height="10" fill="#6a6c6e" /><path d="M9 10C12 7 19 7 22 10 24 14 24 20 21 24 17 26 11 25.500 9 23 6.500 19 6.500 13 9 10z" fill="#d8b09a" /><path d="M20 9C27 8.500 30 14 29.500 19 29 23 25 25.500 21 24.500 23.500 20 23.500 13 20 9z" fill="#1c1a1a" /><path d="M6 9.500C8 8 10.500 8.500 10.500 10.500L8 14.500 5.500 13z" fill="#1c1a1a" /><path d="M14 10v13" fill="none" stroke="#b9b0a8" stroke-width="0.6" stroke-linecap="round" /></g></svg></div>
<span class="c" style="left:420px">2468</span><span class="c" style="left:720px">2468</span>
<span class="c url" style="left:1020px">https://wybshuzirenxm</span>
<span class="tag" style="left:1140px">已完成</span>
</div>
<div class="tr" style="top:160px">
<span class="c" style="left:10px">33</span>
<div class="th" style="left:100px"><svg viewBox="0 0 30 30"><g filter="url(#bl)"><rect x="-4" y="-4" width="38" height="38" fill="#ffffff"/><path d="M8.500 12.300C8.300 9.500 11.300 8 13.500 9.700 15 7.600 18.800 8.300 19.600 11.200" fill="none" stroke="#3d7be0" stroke-width="1.2" stroke-linecap="round" /><path d="M6 10.300C2.300 11.800 2.300 16.200 6.500 17.600" fill="none" stroke="#3fcf7c" stroke-width="1.3" stroke-linecap="round" /><path d="M6.800 12.200H16L15 16H5.800z" fill="#4a7ae6" opacity=".85"/><path d="M17.300 12.200H27.300L26.300 16H16.300z" fill="#4a7ae6" opacity=".8"/><rect x="8.5" y="17.6" width="11" height="1.1" fill="#86a6ec" /></g><g opacity="0.75"><rect x="-4" y="-4" width="38" height="38" fill="#ffffff"/><path d="M8.500 12.300C8.300 9.500 11.300 8 13.500 9.700 15 7.600 18.800 8.300 19.600 11.200" fill="none" stroke="#3d7be0" stroke-width="1.2" stroke-linecap="round" /><path d="M6 10.300C2.300 11.800 2.300 16.200 6.500 17.600" fill="none" stroke="#3fcf7c" stroke-width="1.3" stroke-linecap="round" /><path d="M6.800 12.200H16L15 16H5.800z" fill="#4a7ae6" opacity=".85"/><path d="M17.300 12.200H27.300L26.300 16H16.300z" fill="#4a7ae6" opacity=".8"/><rect x="8.5" y="17.6" width="11" height="1.1" fill="#86a6ec" /></g></svg></div>
<span class="c" style="left:160px">1</span>
<div class="th" style="left:320px"><svg viewBox="0 0 30 30"><g filter="url(#bl)"><rect x="-4" y="-4" width="38" height="38" fill="#bab2a6"/><rect x="-2" y="-2" width="34" height="5" fill="#d2cec6" /><path d="M-2 25H21V32H-2z" fill="#c9c9c5" /><path d="M21 5 32 3V32H20L23 22z" fill="#121214" /><path d="M8 5C12 3 19 4 22 7 24.500 11 24.500 19 22 23 18 26 11 25.500 8 23 5 19 5 9 8 5z" fill="#d3a991" /><path d="M8.500 4.500C3 6 1 12 2 18 3 22 6 25 9 24 6 20 6 9 8.500 4.500z" fill="#1d1a1a" /><path d="M11 7v5M11 16v5" fill="none" stroke="#8a8078" stroke-width="0.7" stroke-linecap="round" /><ellipse cx="18" cy="15" rx="0.7" ry="1.8" fill="#b87070" /></g><g opacity="0.4"><rect x="-4" y="-4" width="38" height="38" fill="#bab2a6"/><rect x="-2" y="-2" width="34" height="5" fill="#d2cec6" /><path d="M-2 25H21V32H-2z" fill="#c9c9c5" /><path d="M21 5 32 3V32H20L23 22z" fill="#121214" /><path d="M8 5C12 3 19 4 22 7 24.500 11 24.500 19 22 23 18 26 11 25.500 8 23 5 19 5 9 8 5z" fill="#d3a991" /><path d="M8.500 4.500C3 6 1 12 2 18 3 22 6 25 9 24 6 20 6 9 8.500 4.500z" fill="#1d1a1a" /><path d="M11 7v5M11 16v5" fill="none" stroke="#8a8078" stroke-width="0.7" stroke-linecap="round" /><ellipse cx="18" cy="15" rx="0.7" ry="1.8" fill="#b87070" /></g></svg></div>
<span class="c" style="left:420px">2464</span><span class="c" style="left:720px">2464</span>
<span class="c url" style="left:1020px">https://wybshuzirenxm</span>
<span class="tag" style="left:1140px">已完成</span>
</div>
<div class="tr" style="top:200px">
<span class="c" style="left:10px">32</span>
<div class="th" style="left:100px"><svg viewBox="0 0 30 30"><g filter="url(#bl)"><rect x="-4" y="-4" width="38" height="38" fill="#ffffff"/><rect x="-2" y="-2" width="34" height="3.6" fill="#6a5038" /><rect x="10" y="-2" width="10" height="3.4" fill="#3a3a38" /><ellipse cx="5.3" cy="9" rx="4.3" ry="4.4" fill="#b98ae2" /><ellipse cx="6.5" cy="9" rx="2.2" ry="3" fill="#f0c0e0" /><rect x="11.5" y="7.8" width="7.5" height="3.8" fill="#4a4a4a" /><rect x="20" y="7.8" width="7.5" height="3.8" fill="#f0603a" /><rect x="-2" y="16" width="34" height="16" fill="#a89a80" /><rect x="14" y="16" width="8" height="14" fill="#8a7a68" /><rect x="22" y="18" width="10" height="10" fill="#cfc0a8" /><rect x="25" y="22" width="4" height="5" fill="#7ab0d8" /><rect x="19.5" y="20" width="1.2" height="3" fill="#d83030" /><ellipse cx="7" cy="19.5" rx="3.3" ry="3.2" fill="#c8a898" /><path d="M2 17.500C4 14.500 10 14.500 12 18L11 19H3z" fill="#2a2624" /><path d="M-2 32V25C2 22 12 22 15 25V32z" fill="#1e2024" /></g><g opacity="0.4"><rect x="-4" y="-4" width="38" height="38" fill="#ffffff"/><rect x="-2" y="-2" width="34" height="3.6" fill="#6a5038" /><rect x="10" y="-2" width="10" height="3.4" fill="#3a3a38" /><ellipse cx="5.3" cy="9" rx="4.3" ry="4.4" fill="#b98ae2" /><ellipse cx="6.5" cy="9" rx="2.2" ry="3" fill="#f0c0e0" /><rect x="11.5" y="7.8" width="7.5" height="3.8" fill="#4a4a4a" /><rect x="20" y="7.8" width="7.5" height="3.8" fill="#f0603a" /><rect x="-2" y="16" width="34" height="16" fill="#a89a80" /><rect x="14" y="16" width="8" height="14" fill="#8a7a68" /><rect x="22" y="18" width="10" height="10" fill="#cfc0a8" /><rect x="25" y="22" width="4" height="5" fill="#7ab0d8" /><rect x="19.5" y="20" width="1.2" height="3" fill="#d83030" /><ellipse cx="7" cy="19.5" rx="3.3" ry="3.2" fill="#c8a898" /><path d="M2 17.500C4 14.500 10 14.500 12 18L11 19H3z" fill="#2a2624" /><path d="M-2 32V25C2 22 12 22 15 25V32z" fill="#1e2024" /></g></svg></div>
<span class="c" style="left:160px">田 野</span>
<div class="th" style="left:320px"><svg viewBox="0 0 30 30"><g filter="url(#bl)"><rect x="-4" y="-4" width="38" height="38" fill="#c8c0cc"/><rect x="-2" y="-2" width="34" height="12" fill="#1b35c4" /><rect x="-2" y="-2" width="34" height="4.5" fill="#14269c" /><ellipse cx="24" cy="5.5" rx="5" ry="2.3" fill="#3a6ae8" /><ellipse cx="6" cy="3.5" rx="4" ry="1.5" fill="#2a50e0" /><rect x="21" y="11" width="11" height="10" fill="#f0b9c9" /><rect x="-2" y="10" width="6" height="19" fill="#2a2a38" /><path d="M2 26C1 13 5 4.500 15 4.500 23 4.500 26.500 9 25 15 23 9.500 11 9.500 10 15 9.500 20 8 25 2 26z" fill="#1a1622" /><path d="M12 18h7l1 5h-9z" fill="#e4c4bc" /><ellipse cx="15.5" cy="13.5" rx="5.8" ry="7" fill="#e9cac2" /><ellipse cx="15.3" cy="17.3" rx="1.5" ry="0.7" fill="#d03848" /><path d="M11.800 12h2.600M17 12h2.600" fill="none" stroke="#4a3040" stroke-width="0.8" stroke-linecap="round" /><path d="M-2 32V27C3 23 9 21.500 12 22 14 24 17 24 20 21.500 25 21 29 23 32 26V32z" fill="#e6e6ec" /><rect x="-2" y="29" width="4" height="3" fill="#402030" /><path d="M9 24.500h12" fill="none" stroke="#b8b0b8" stroke-width="0.6" stroke-linecap="round" /></g><g opacity="0.4"><rect x="-4" y="-4" width="38" height="38" fill="#c8c0cc"/><rect x="-2" y="-2" width="34" height="12" fill="#1b35c4" /><rect x="-2" y="-2" width="34" height="4.5" fill="#14269c" /><ellipse cx="24" cy="5.5" rx="5" ry="2.3" fill="#3a6ae8" /><ellipse cx="6" cy="3.5" rx="4" ry="1.5" fill="#2a50e0" /><rect x="21" y="11" width="11" height="10" fill="#f0b9c9" /><rect x="-2" y="10" width="6" height="19" fill="#2a2a38" /><path d="M2 26C1 13 5 4.500 15 4.500 23 4.500 26.500 9 25 15 23 9.500 11 9.500 10 15 9.500 20 8 25 2 26z" fill="#1a1622" /><path d="M12 18h7l1 5h-9z" fill="#e4c4bc" /><ellipse cx="15.5" cy="13.5" rx="5.8" ry="7" fill="#e9cac2" /><ellipse cx="15.3" cy="17.3" rx="1.5" ry="0.7" fill="#d03848" /><path d="M11.800 12h2.600M17 12h2.600" fill="none" stroke="#4a3040" stroke-width="0.8" stroke-linecap="round" /><path d="M-2 32V27C3 23 9 21.500 12 22 14 24 17 24 20 21.500 25 21 29 23 32 26V32z" fill="#e6e6ec" /><rect x="-2" y="29" width="4" height="3" fill="#402030" /><path d="M9 24.500h12" fill="none" stroke="#b8b0b8" stroke-width="0.6" stroke-linecap="round" /></g></svg></div>
<span class="c" style="left:420px">2354</span><span class="c" style="left:720px">2354</span>
<span class="c url" style="left:1020px">https://wybshuzirenxm</span>
<span class="tag" style="left:1140px">已完成</span>
</div>
<div class="tr" style="top:240px">
<span class="c" style="left:10px">31</span>
<div class="th" style="left:100px"><svg viewBox="0 0 30 30"><g filter="url(#bl)"><rect x="-4" y="-4" width="38" height="38" fill="#7f93a8"/><rect x="-2" y="-2" width="34" height="8" fill="#42709f" /><rect x="-2" y="-2" width="34" height="3.5" fill="#35608f" /><path d="M-2 6.500 8 5 14 6 22 4.500 32 5.500V9.500H-2z" fill="#a9bccd" /><path d="M13 5.600 20 4.800 30 5.300V7.800H15z" fill="#e4ebf2" /><path d="M-2 9 6 8 14 9.500 22 8.500 32 9.500V14H-2z" fill="#56759a" /><path d="M-2 10 5 9.500 7 13.500H-2z" fill="#85756c" /><rect x="-2" y="13.2" width="34" height="3.6" fill="#2b4d78" /><rect x="-2" y="16.6" width="34" height="7" fill="#938a80" /><rect x="-2" y="20" width="34" height="3.5" fill="#857c74" /><ellipse cx="8.7" cy="12.3" rx="1.7" ry="1.8" fill="#241e1c" /><path d="M6.300 14.500C7.500 13.400 10.500 13.400 12 14.500L14 23H5z" fill="#a49c94" /><path d="M-2 32V24.500L3 22.300H25L32 25.500V32z" fill="#121d34" /><rect x="3" y="26.3" width="2.2" height="2.6" fill="#8f875c" /><rect x="8" y="26.3" width="2.2" height="2.6" fill="#8f875c" /></g><g opacity="0.4"><rect x="-4" y="-4" width="38" height="38" fill="#7f93a8"/><rect x="-2" y="-2" width="34" height="8" fill="#42709f" /><rect x="-2" y="-2" width="34" height="3.5" fill="#35608f" /><path d="M-2 6.500 8 5 14 6 22 4.500 32 5.500V9.500H-2z" fill="#a9bccd" /><path d="M13 5.600 20 4.800 30 5.300V7.800H15z" fill="#e4ebf2" /><path d="M-2 9 6 8 14 9.500 22 8.500 32 9.500V14H-2z" fill="#56759a" /><path d="M-2 10 5 9.500 7 13.500H-2z" fill="#85756c" /><rect x="-2" y="13.2" width="34" height="3.6" fill="#2b4d78" /><rect x="-2" y="16.6" width="34" height="7" fill="#938a80" /><rect x="-2" y="20" width="34" height="3.5" fill="#857c74" /><ellipse cx="8.7" cy="12.3" rx="1.7" ry="1.8" fill="#241e1c" /><path d="M6.300 14.500C7.500 13.400 10.500 13.400 12 14.500L14 23H5z" fill="#a49c94" /><path d="M-2 32V24.500L3 22.300H25L32 25.500V32z" fill="#121d34" /><rect x="3" y="26.3" width="2.2" height="2.6" fill="#8f875c" /><rect x="8" y="26.3" width="2.2" height="2.6" fill="#8f875c" /></g></svg></div>
<span class="c" style="left:160px">A#0程序开发部</span>
<div class="th" style="left:320px"><svg viewBox="0 0 30 30"><g filter="url(#bl)"><rect x="-4" y="-4" width="38" height="38" fill="#dcdcdc"/><rect x="-2" y="5" width="5" height="16" fill="#45494b" /><rect x="25" y="4" width="7" height="14" fill="#cfd0d0" /><ellipse cx="14" cy="13" rx="9.3" ry="9.2" fill="#e2bfaa" /><path d="M4.500 10C3.500 2.500 25 1.500 24.500 10 20 6.500 9 6.500 4.500 10z" fill="#3a3230" /><path d="M8 11.500h4.500M15.500 11.500h4.500" fill="none" stroke="#6a5048" stroke-width="0.8" stroke-linecap="round" /><ellipse cx="14" cy="17.8" rx="2" ry="0.8" fill="#c05868" /><path d="M-2 32V22C2 19 6 19.500 8 21 11 24 17 24 20 21 23 19 28 19.500 32 22V32z" fill="#7b7d79" /><path d="M9 22C11 24.500 17 24.500 19 22L20 32H8z" fill="#5a6058" /><rect x="24" y="22" width="3" height="2" fill="#c8b070" /></g><g opacity="0.4"><rect x="-4" y="-4" width="38" height="38" fill="#dcdcdc"/><rect x="-2" y="5" width="5" height="16" fill="#45494b" /><rect x="25" y="4" width="7" height="14" fill="#cfd0d0" /><ellipse cx="14" cy="13" rx="9.3" ry="9.2" fill="#e2bfaa" /><path d="M4.500 10C3.500 2.500 25 1.500 24.500 10 20 6.500 9 6.500 4.500 10z" fill="#3a3230" /><path d="M8 11.500h4.500M15.500 11.500h4.500" fill="none" stroke="#6a5048" stroke-width="0.8" stroke-linecap="round" /><ellipse cx="14" cy="17.8" rx="2" ry="0.8" fill="#c05868" /><path d="M-2 32V22C2 19 6 19.500 8 21 11 24 17 24 20 21 23 19 28 19.500 32 22V32z" fill="#7b7d79" /><path d="M9 22C11 24.500 17 24.500 19 22L20 32H8z" fill="#5a6058" /><rect x="24" y="22" width="3" height="2" fill="#c8b070" /></g></svg></div>
<span class="c" style="left:420px">2305</span><span class="c" style="left:720px">2305</span>
<span class="c url" style="left:1020px">https://wybshuzirenxm</span>
<span class="tag" style="left:1140px">已完成</span>
</div>
<div class="tr" style="top:280px">
<span class="c" style="left:10px">30</span>
<div class="th" style="left:100px"><svg viewBox="0 0 30 30"><g filter="url(#bl)"><rect x="-4" y="-4" width="38" height="38" fill="#7f93a8"/><rect x="-2" y="-2" width="34" height="8" fill="#42709f" /><rect x="-2" y="-2" width="34" height="3.5" fill="#35608f" /><path d="M-2 6.500 8 5 14 6 22 4.500 32 5.500V9.500H-2z" fill="#a9bccd" /><path d="M13 5.600 20 4.800 30 5.300V7.800H15z" fill="#e4ebf2" /><path d="M-2 9 6 8 14 9.500 22 8.500 32 9.500V14H-2z" fill="#56759a" /><path d="M-2 10 5 9.500 7 13.500H-2z" fill="#85756c" /><rect x="-2" y="13.2" width="34" height="3.6" fill="#2b4d78" /><rect x="-2" y="16.6" width="34" height="7" fill="#938a80" /><rect x="-2" y="20" width="34" height="3.5" fill="#857c74" /><ellipse cx="8.7" cy="12.3" rx="1.7" ry="1.8" fill="#241e1c" /><path d="M6.300 14.500C7.500 13.400 10.500 13.400 12 14.500L14 23H5z" fill="#a49c94" /><path d="M-2 32V24.500L3 22.300H25L32 25.500V32z" fill="#121d34" /><rect x="3" y="26.3" width="2.2" height="2.6" fill="#8f875c" /><rect x="8" y="26.3" width="2.2" height="2.6" fill="#8f875c" /></g><g opacity="0.4"><rect x="-4" y="-4" width="38" height="38" fill="#7f93a8"/><rect x="-2" y="-2" width="34" height="8" fill="#42709f" /><rect x="-2" y="-2" width="34" height="3.5" fill="#35608f" /><path d="M-2 6.500 8 5 14 6 22 4.500 32 5.500V9.500H-2z" fill="#a9bccd" /><path d="M13 5.600 20 4.800 30 5.300V7.800H15z" fill="#e4ebf2" /><path d="M-2 9 6 8 14 9.500 22 8.500 32 9.500V14H-2z" fill="#56759a" /><path d="M-2 10 5 9.500 7 13.500H-2z" fill="#85756c" /><rect x="-2" y="13.2" width="34" height="3.6" fill="#2b4d78" /><rect x="-2" y="16.6" width="34" height="7" fill="#938a80" /><rect x="-2" y="20" width="34" height="3.5" fill="#857c74" /><ellipse cx="8.7" cy="12.3" rx="1.7" ry="1.8" fill="#241e1c" /><path d="M6.300 14.500C7.500 13.400 10.500 13.400 12 14.500L14 23H5z" fill="#a49c94" /><path d="M-2 32V24.500L3 22.300H25L32 25.500V32z" fill="#121d34" /><rect x="3" y="26.3" width="2.2" height="2.6" fill="#8f875c" /><rect x="8" y="26.3" width="2.2" height="2.6" fill="#8f875c" /></g></svg></div>
<span class="c" style="left:160px">A#0程序开发部</span>
<div class="th" style="left:320px"><svg viewBox="0 0 30 30"><g filter="url(#bl)"><rect x="-4" y="-4" width="38" height="38" fill="#2b2d2f"/><rect x="-2" y="4" width="8" height="17" fill="#c9cdd1" /><rect x="-2" y="10" width="6" height="1" fill="#c04040" /><rect x="-2" y="14" width="6" height="1" fill="#c04040" /><rect x="24" y="8" width="8" height="15" fill="#a9b1b9" /><rect x="16" y="2" width="8" height="2" fill="#d8d8c8" /><ellipse cx="14.5" cy="15" rx="8" ry="8" fill="#d8b09c" /><path d="M6.500 12C5.500 4.500 23.500 4.500 22.800 12 19 8.500 10 8.500 6.500 12z" fill="#1c1c1c" /><path d="M9.500 13.500h3.500M16 13.500h3.500" fill="none" stroke="#5a4640" stroke-width="0.8" stroke-linecap="round" /><ellipse cx="14.5" cy="19" rx="1.6" ry="0.7" fill="#b85060" /><path d="M-2 32V24C2 21.500 7 21 9 22 12 24.500 17 24.500 20 22 23 20.500 28 21.500 32 24V32z" fill="#3e3e30" /><rect x="-2" y="29" width="34" height="3" fill="#1a1a14" /></g><g opacity="0.4"><rect x="-4" y="-4" width="38" height="38" fill="#2b2d2f"/><rect x="-2" y="4" width="8" height="17" fill="#c9cdd1" /><rect x="-2" y="10" width="6" height="1" fill="#c04040" /><rect x="-2" y="14" width="6" height="1" fill="#c04040" /><rect x="24" y="8" width="8" height="15" fill="#a9b1b9" /><rect x="16" y="2" width="8" height="2" fill="#d8d8c8" /><ellipse cx="14.5" cy="15" rx="8" ry="8" fill="#d8b09c" /><path d="M6.500 12C5.500 4.500 23.500 4.500 22.800 12 19 8.500 10 8.500 6.500 12z" fill="#1c1c1c" /><path d="M9.500 13.500h3.500M16 13.500h3.500" fill="none" stroke="#5a4640" stroke-width="0.8" stroke-linecap="round" /><ellipse cx="14.5" cy="19" rx="1.6" ry="0.7" fill="#b85060" /><path d="M-2 32V24C2 21.500 7 21 9 22 12 24.500 17 24.500 20 22 23 20.500 28 21.500 32 24V32z" fill="#3e3e30" /><rect x="-2" y="29" width="34" height="3" fill="#1a1a14" /></g></svg></div>
<span class="c" style="left:420px">2296</span><span class="c" style="left:720px">2296</span>
<span class="c url" style="left:1020px">https://wybshuzirenxm</span>
<span class="tag" style="left:1140px">已完成</span>
</div>
<div class="tr" style="top:320px">
<span class="c" style="left:10px">29</span>
<div class="th" style="left:100px"><svg viewBox="0 0 30 30"><g filter="url(#bl)"><rect x="-4" y="-4" width="38" height="38" fill="#2b2e36"/><rect x="16" y="-2" width="16" height="7" fill="#d4d8dc" /><rect x="24" y="4" width="8" height="18" fill="#6c7078" /><rect x="13" y="3" width="9" height="5" fill="#3a3e48" /><ellipse cx="6.5" cy="6" rx="5" ry="4.6" fill="#7fb23c" /><ellipse cx="9.5" cy="10" rx="3.5" ry="3" fill="#8aba44" /><ellipse cx="3.5" cy="4" rx="2.5" ry="2" fill="#98c850" /><ellipse cx="6" cy="8" rx="2" ry="1.5" fill="#4a6a28" /><path d="M9 11 5.500 21" fill="none" stroke="#a07c4c" stroke-width="1.1" stroke-linecap="round" /><rect x="-2" y="19" width="4.5" height="13" fill="#c8c8cc" /><ellipse cx="20" cy="17.5" rx="7" ry="8.4" fill="#dcb8a4" /><path d="M12.800 14C12 7.500 17 5.800 20.500 6 25 6.200 28 9.500 27.200 14.500 24 10.800 17 10.800 12.800 14z" fill="#453630" /><path d="M15 16.800h4M21.500 16.800h4" fill="none" stroke="#efe4de" stroke-width="0.7" stroke-linecap="round" /><ellipse cx="20" cy="22.3" rx="1.4" ry="0.55" fill="#c07878" /><path d="M-2 32V24.500C4 22 9 22 13 23 16 27.500 24 27.500 27 24 29 24 31 24.500 32 25.500V32z" fill="#292b2f" /><path d="M2 27 10 25.500M4 30 12 28" fill="none" stroke="#45474b" stroke-width="0.8" stroke-linecap="round" /></g><g opacity="0.4"><rect x="-4" y="-4" width="38" height="38" fill="#2b2e36"/><rect x="16" y="-2" width="16" height="7" fill="#d4d8dc" /><rect x="24" y="4" width="8" height="18" fill="#6c7078" /><rect x="13" y="3" width="9" height="5" fill="#3a3e48" /><ellipse cx="6.5" cy="6" rx="5" ry="4.6" fill="#7fb23c" /><ellipse cx="9.5" cy="10" rx="3.5" ry="3" fill="#8aba44" /><ellipse cx="3.5" cy="4" rx="2.5" ry="2" fill="#98c850" /><ellipse cx="6" cy="8" rx="2" ry="1.5" fill="#4a6a28" /><path d="M9 11 5.500 21" fill="none" stroke="#a07c4c" stroke-width="1.1" stroke-linecap="round" /><rect x="-2" y="19" width="4.5" height="13" fill="#c8c8cc" /><ellipse cx="20" cy="17.5" rx="7" ry="8.4" fill="#dcb8a4" /><path d="M12.800 14C12 7.500 17 5.800 20.500 6 25 6.200 28 9.500 27.200 14.500 24 10.800 17 10.800 12.800 14z" fill="#453630" /><path d="M15 16.800h4M21.500 16.800h4" fill="none" stroke="#efe4de" stroke-width="0.7" stroke-linecap="round" /><ellipse cx="20" cy="22.3" rx="1.4" ry="0.55" fill="#c07878" /><path d="M-2 32V24.500C4 22 9 22 13 23 16 27.500 24 27.500 27 24 29 24 31 24.500 32 25.500V32z" fill="#292b2f" /><path d="M2 27 10 25.500M4 30 12 28" fill="none" stroke="#45474b" stroke-width="0.8" stroke-linecap="round" /></g></svg></div>
<span class="c" style="left:160px">金鑫</span>
<div class="th" style="left:320px"><svg viewBox="0 0 30 30"><g filter="url(#bl)"><rect x="-4" y="-4" width="38" height="38" fill="#e8dddd"/><rect x="20" y="-2" width="12" height="8" fill="#5b6b91" /><rect x="27" y="4" width="5" height="28" fill="#b06a42" /><rect x="-2" y="14" width="8" height="18" fill="#b4b0b0" /><rect x="0" y="10" width="5" height="20" fill="#d8d0d0" /><path d="M8 22H28V32H6z" fill="#e9e5dd" /><ellipse cx="18.5" cy="13" rx="8.5" ry="9.3" fill="#e0a8a0" /><path d="M9 13C8.500 7 12 3.500 16 3.500 12.500 6 11.500 9.500 12 13.500z" fill="#1e1a1c" /><path d="M15 9C17 8 19 9 19.500 12L19 21 17 22.500 15.500 18z" fill="#4a2e30" /><ellipse cx="23" cy="14" rx="3" ry="6" fill="#e8b8a8" /><rect x="16.5" y="21.5" width="3" height="2.5" fill="#f0ece4" /></g><g opacity="0.4"><rect x="-4" y="-4" width="38" height="38" fill="#e8dddd"/><rect x="20" y="-2" width="12" height="8" fill="#5b6b91" /><rect x="27" y="4" width="5" height="28" fill="#b06a42" /><rect x="-2" y="14" width="8" height="18" fill="#b4b0b0" /><rect x="0" y="10" width="5" height="20" fill="#d8d0d0" /><path d="M8 22H28V32H6z" fill="#e9e5dd" /><ellipse cx="18.5" cy="13" rx="8.5" ry="9.3" fill="#e0a8a0" /><path d="M9 13C8.500 7 12 3.500 16 3.500 12.500 6 11.500 9.500 12 13.500z" fill="#1e1a1c" /><path d="M15 9C17 8 19 9 19.500 12L19 21 17 22.500 15.500 18z" fill="#4a2e30" /><ellipse cx="23" cy="14" rx="3" ry="6" fill="#e8b8a8" /><rect x="16.5" y="21.5" width="3" height="2.5" fill="#f0ece4" /></g></svg></div>
<span class="c" style="left:420px">2037</span><span class="c" style="left:720px">2037</span>
<span class="c url" style="left:1020px">https://wybshuzirenxm</span>
<span class="tag" style="left:1140px">已完成</span>
</div>
<div class="tr" style="top:360px">
<span class="c" style="left:10px">28</span>
<div class="th" style="left:100px"><svg viewBox="0 0 30 30"><g filter="url(#bl)"><rect x="-4" y="-4" width="38" height="38" fill="#8e9aad"/><rect x="-2" y="-2" width="34" height="8" fill="#1f2b42" /><rect x="19" y="-2" width="6.5" height="9.5" fill="#3b6eb8" /><rect x="25.5" y="-2" width="6" height="3" fill="#e8ecf0" /><rect x="-2" y="6" width="34" height="2" fill="#c4ccd8" /><rect x="-2" y="9" width="34" height="1.6" fill="#aab4c4" /><rect x="-2" y="12" width="34" height="1.6" fill="#c0c8d4" /><rect x="-2" y="10" width="9" height="9" fill="#2b3e4c" /><rect x="21" y="10" width="11" height="10" fill="#2f4250" /><rect x="-2" y="21" width="34" height="11" fill="#f1ebe3" /><rect x="1" y="17" width="3.2" height="9" fill="#f4f0ea" /><rect x="25" y="17" width="3" height="9" fill="#f4f0ea" /><rect x="-2" y="26" width="34" height="1" fill="#d8c8b0" /><path d="M7.500 23V15.500C8 13.500 10.500 12.800 13.500 12.800S19 13.500 19.800 15.500L20.500 23z" fill="#14161b" /><ellipse cx="13.3" cy="8.6" rx="2.4" ry="3" fill="#dbbcae" /><path d="M10.800 7.500C10.800 4 15.800 4 15.800 7.500 14.500 6.200 12.300 6.200 10.800 7.500z" fill="#1a1a1e" /><path d="M12.300 12.300 13.400 14.500 14.600 12.300z" fill="#f0f0f0" /><rect x="10" y="28" width="10" height="4" fill="#101010" /></g><g opacity="0.4"><rect x="-4" y="-4" width="38" height="38" fill="#8e9aad"/><rect x="-2" y="-2" width="34" height="8" fill="#1f2b42" /><rect x="19" y="-2" width="6.5" height="9.5" fill="#3b6eb8" /><rect x="25.5" y="-2" width="6" height="3" fill="#e8ecf0" /><rect x="-2" y="6" width="34" height="2" fill="#c4ccd8" /><rect x="-2" y="9" width="34" height="1.6" fill="#aab4c4" /><rect x="-2" y="12" width="34" height="1.6" fill="#c0c8d4" /><rect x="-2" y="10" width="9" height="9" fill="#2b3e4c" /><rect x="21" y="10" width="11" height="10" fill="#2f4250" /><rect x="-2" y="21" width="34" height="11" fill="#f1ebe3" /><rect x="1" y="17" width="3.2" height="9" fill="#f4f0ea" /><rect x="25" y="17" width="3" height="9" fill="#f4f0ea" /><rect x="-2" y="26" width="34" height="1" fill="#d8c8b0" /><path d="M7.500 23V15.500C8 13.500 10.500 12.800 13.500 12.800S19 13.500 19.800 15.500L20.500 23z" fill="#14161b" /><ellipse cx="13.3" cy="8.6" rx="2.4" ry="3" fill="#dbbcae" /><path d="M10.800 7.500C10.800 4 15.800 4 15.800 7.500 14.500 6.200 12.300 6.200 10.800 7.500z" fill="#1a1a1e" /><path d="M12.300 12.300 13.400 14.500 14.600 12.300z" fill="#f0f0f0" /><rect x="10" y="28" width="10" height="4" fill="#101010" /></g></svg></div>
<span class="c" style="left:160px">蓉儿姐</span>
<div class="th" style="left:320px"><svg viewBox="0 0 30 30"><g filter="url(#bl)"><rect x="-4" y="-4" width="38" height="38" fill="#d9d9dd"/><rect x="-2" y="-2" width="34" height="4" fill="#e4e4e8" /><ellipse cx="15.5" cy="11.5" rx="6.5" ry="7.2" fill="#e9c9b9" /><path d="M8 11C6.500 2.500 23.500 2 22.800 10.500 20 6.500 11.500 6.500 8 11z" fill="#1a1a1c" /><ellipse cx="15.8" cy="15.3" rx="1.5" ry="0.7" fill="#d03848" /><path d="M11.500 10.500h3M17 10.500h3" fill="none" stroke="#4a3838" stroke-width="0.7" stroke-linecap="round" /><path d="M11 18H21L22 32H12z" fill="#e1d9d1" /><path d="M15.500 20.500 18.500 20.500 19.500 27 17 29z" fill="#a89080" /><path d="M-2 32V21C2 19 8 18 11.500 17.500L16 32z" fill="#15161a" /><path d="M32 32V19C28 17 24 16.500 20.500 17L19.500 32z" fill="#15161a" /></g><g opacity="0.4"><rect x="-4" y="-4" width="38" height="38" fill="#d9d9dd"/><rect x="-2" y="-2" width="34" height="4" fill="#e4e4e8" /><ellipse cx="15.5" cy="11.5" rx="6.5" ry="7.2" fill="#e9c9b9" /><path d="M8 11C6.500 2.500 23.500 2 22.800 10.500 20 6.500 11.500 6.500 8 11z" fill="#1a1a1c" /><ellipse cx="15.8" cy="15.3" rx="1.5" ry="0.7" fill="#d03848" /><path d="M11.500 10.500h3M17 10.500h3" fill="none" stroke="#4a3838" stroke-width="0.7" stroke-linecap="round" /><path d="M11 18H21L22 32H12z" fill="#e1d9d1" /><path d="M15.500 20.500 18.500 20.500 19.500 27 17 29z" fill="#a89080" /><path d="M-2 32V21C2 19 8 18 11.500 17.500L16 32z" fill="#15161a" /><path d="M32 32V19C28 17 24 16.500 20.500 17L19.500 32z" fill="#15161a" /></g></svg></div>
<span class="c" style="left:420px">1863</span><span class="c" style="left:720px">1863</span>
<span class="c url" style="left:1020px">https://wybshuzirenxm</span>
<span class="tag" style="left:1140px">已完成</span>
</div>
<div class="tr" style="top:400px">
<span class="c" style="left:10px">27</span>
<div class="th" style="left:100px"><svg viewBox="0 0 30 30"><g filter="url(#bl)"><rect x="-4" y="-4" width="38" height="38" fill="#7f93a8"/><rect x="-2" y="-2" width="34" height="8" fill="#42709f" /><rect x="-2" y="-2" width="34" height="3.5" fill="#35608f" /><path d="M-2 6.500 8 5 14 6 22 4.500 32 5.500V9.500H-2z" fill="#a9bccd" /><path d="M13 5.600 20 4.800 30 5.300V7.800H15z" fill="#e4ebf2" /><path d="M-2 9 6 8 14 9.500 22 8.500 32 9.500V14H-2z" fill="#56759a" /><path d="M-2 10 5 9.500 7 13.500H-2z" fill="#85756c" /><rect x="-2" y="13.2" width="34" height="3.6" fill="#2b4d78" /><rect x="-2" y="16.6" width="34" height="7" fill="#938a80" /><rect x="-2" y="20" width="34" height="3.5" fill="#857c74" /><ellipse cx="8.7" cy="12.3" rx="1.7" ry="1.8" fill="#241e1c" /><path d="M6.300 14.500C7.500 13.400 10.500 13.400 12 14.500L14 23H5z" fill="#a49c94" /><path d="M-2 32V24.500L3 22.300H25L32 25.500V32z" fill="#121d34" /><rect x="3" y="26.3" width="2.2" height="2.6" fill="#8f875c" /><rect x="8" y="26.3" width="2.2" height="2.6" fill="#8f875c" /></g><g opacity="0.4"><rect x="-4" y="-4" width="38" height="38" fill="#7f93a8"/><rect x="-2" y="-2" width="34" height="8" fill="#42709f" /><rect x="-2" y="-2" width="34" height="3.5" fill="#35608f" /><path d="M-2 6.500 8 5 14 6 22 4.500 32 5.500V9.500H-2z" fill="#a9bccd" /><path d="M13 5.600 20 4.800 30 5.300V7.800H15z" fill="#e4ebf2" /><path d="M-2 9 6 8 14 9.500 22 8.500 32 9.500V14H-2z" fill="#56759a" /><path d="M-2 10 5 9.500 7 13.500H-2z" fill="#85756c" /><rect x="-2" y="13.2" width="34" height="3.6" fill="#2b4d78" /><rect x="-2" y="16.6" width="34" height="7" fill="#938a80" /><rect x="-2" y="20" width="34" height="3.5" fill="#857c74" /><ellipse cx="8.7" cy="12.3" rx="1.7" ry="1.8" fill="#241e1c" /><path d="M6.300 14.500C7.500 13.400 10.500 13.400 12 14.500L14 23H5z" fill="#a49c94" /><path d="M-2 32V24.500L3 22.300H25L32 25.500V32z" fill="#121d34" /><rect x="3" y="26.3" width="2.2" height="2.6" fill="#8f875c" /><rect x="8" y="26.3" width="2.2" height="2.6" fill="#8f875c" /></g></svg></div>
<span class="c" style="left:160px">A#0程序开发部</span>
<div class="th" style="left:320px"><svg viewBox="0 0 30 30"><g filter="url(#bl)"><rect x="-4" y="-4" width="38" height="38" fill="#2f3133"/><rect x="-2" y="7" width="8" height="10" fill="#8b9399" /><rect x="-2" y="16" width="7" height="6" fill="#c0b8a0" /><rect x="-2" y="-2" width="34" height="5" fill="#3a3c3a" /><rect x="4" y="0" width="20" height="1.5" fill="#8a8c88" /><rect x="25" y="8" width="7" height="10" fill="#4a4e50" /><ellipse cx="15" cy="12.3" rx="7.8" ry="7.8" fill="#d4ab9e" /><path d="M7 10C6 2.500 24.500 2.500 23.500 10 20 6.500 10.500 6.500 7 10z" fill="#171719" /><path d="M10 11.300h3.500M16.500 11.300h3.500" fill="none" stroke="#4a3630" stroke-width="0.9" stroke-linecap="round" /><ellipse cx="15" cy="16.3" rx="1.7" ry="0.7" fill="#c05868" /><path d="M-2 32V22C3 19.500 8 19.800 10.500 19 13 21 17 21 20 19 23 19.800 28 20 32 21V32z" fill="#101216" /></g><g opacity="0.4"><rect x="-4" y="-4" width="38" height="38" fill="#2f3133"/><rect x="-2" y="7" width="8" height="10" fill="#8b9399" /><rect x="-2" y="16" width="7" height="6" fill="#c0b8a0" /><rect x="-2" y="-2" width="34" height="5" fill="#3a3c3a" /><rect x="4" y="0" width="20" height="1.5" fill="#8a8c88" /><rect x="25" y="8" width="7" height="10" fill="#4a4e50" /><ellipse cx="15" cy="12.3" rx="7.8" ry="7.8" fill="#d4ab9e" /><path d="M7 10C6 2.500 24.500 2.500 23.500 10 20 6.500 10.500 6.500 7 10z" fill="#171719" /><path d="M10 11.300h3.500M16.500 11.300h3.500" fill="none" stroke="#4a3630" stroke-width="0.9" stroke-linecap="round" /><ellipse cx="15" cy="16.3" rx="1.7" ry="0.7" fill="#c05868" /><path d="M-2 32V22C3 19.500 8 19.800 10.500 19 13 21 17 21 20 19 23 19.800 28 20 32 21V32z" fill="#101216" /></g></svg></div>
<span class="c" style="left:420px">1623</span><span class="c" style="left:720px">1623</span>
<span class="c url" style="left:1020px">https://wybshuzirenxm</span>
<span class="tag" style="left:1140px">已完成</span>
</div>
<div class="tr" style="top:440px">
<span class="c" style="left:10px">26</span>
<div class="th" style="left:100px"><svg viewBox="0 0 30 30"><g filter="url(#bl)"><rect x="-4" y="-4" width="38" height="38" fill="#ffffff"/><path d="M10.800 9 17 15M18.200 9 10.800 16" fill="none" stroke="#1f8fe8" stroke-width="2" stroke-linecap="round" /><ellipse cx="10.5" cy="8.7" rx="1.9" ry="1.9" fill="#1f8fe8" /><ellipse cx="18.5" cy="8.7" rx="1.9" ry="1.9" fill="#1f8fe8" /><ellipse cx="10.5" cy="16.3" rx="1.9" ry="1.9" fill="#1f8fe8" /><ellipse cx="17.3" cy="14.6" rx="2.9" ry="2.9" fill="#f8e01c" /><rect x="9" y="21.2" width="12" height="1.1" fill="#3a3a3a" /><rect x="3" y="23.7" width="24" height="0.8" fill="#9a9a9a" /></g><g opacity="0.75"><rect x="-4" y="-4" width="38" height="38" fill="#ffffff"/><path d="M10.800 9 17 15M18.200 9 10.800 16" fill="none" stroke="#1f8fe8" stroke-width="2" stroke-linecap="round" /><ellipse cx="10.5" cy="8.7" rx="1.9" ry="1.9" fill="#1f8fe8" /><ellipse cx="18.5" cy="8.7" rx="1.9" ry="1.9" fill="#1f8fe8" /><ellipse cx="10.5" cy="16.3" rx="1.9" ry="1.9" fill="#1f8fe8" /><ellipse cx="17.3" cy="14.6" rx="2.9" ry="2.9" fill="#f8e01c" /><rect x="9" y="21.2" width="12" height="1.1" fill="#3a3a3a" /><rect x="3" y="23.7" width="24" height="0.8" fill="#9a9a9a" /></g></svg></div>
<span class="c" style="left:160px">软件开发商-大...</span>
<div class="th" style="left:320px"><svg viewBox="0 0 30 30"><g filter="url(#bl)"><rect x="-4" y="-4" width="38" height="38" fill="#22b152"/><rect x="-2" y="-2" width="5" height="10" fill="#d9d9a1" /><rect x="20" y="-2" width="5" height="3.5" fill="#c8d8a0" /><rect x="-2" y="16" width="8" height="16" fill="#1a1e1c" /><ellipse cx="14" cy="13.8" rx="7.8" ry="8.3" fill="#c49c8c" /><path d="M6.500 11.500C5.500 3.500 23.500 3.500 22.500 11.500 19 8 10 8 6.500 11.500z" fill="#161616" /><path d="M9.500 12.500h3.500M15.500 12.500h3.500" fill="none" stroke="#3a2a26" stroke-width="0.9" stroke-linecap="round" /><ellipse cx="14" cy="18" rx="1.8" ry="0.7" fill="#a04858" /><path d="M-2 32V20C2 18.500 7 20.500 9.500 21 12 23 17 23 19.500 20.500 23 19 28 18.500 32 18.500V32z" fill="#121416" /></g><g opacity="0.4"><rect x="-4" y="-4" width="38" height="38" fill="#22b152"/><rect x="-2" y="-2" width="5" height="10" fill="#d9d9a1" /><rect x="20" y="-2" width="5" height="3.5" fill="#c8d8a0" /><rect x="-2" y="16" width="8" height="16" fill="#1a1e1c" /><ellipse cx="14" cy="13.8" rx="7.8" ry="8.3" fill="#c49c8c" /><path d="M6.500 11.500C5.500 3.500 23.500 3.500 22.500 11.500 19 8 10 8 6.500 11.500z" fill="#161616" /><path d="M9.500 12.500h3.500M15.500 12.500h3.500" fill="none" stroke="#3a2a26" stroke-width="0.9" stroke-linecap="round" /><ellipse cx="14" cy="18" rx="1.8" ry="0.7" fill="#a04858" /><path d="M-2 32V20C2 18.500 7 20.500 9.500 21 12 23 17 23 19.500 20.500 23 19 28 18.500 32 18.500V32z" fill="#121416" /></g></svg></div>
<span class="c" style="left:420px">1620</span><span class="c" style="left:720px">1620</span>
<span class="c url" style="left:1020px">https://wybshuzirenxm</span>
<span class="tag" style="left:1140px">已完成</span>
</div>
<div class="tr" style="top:480px">
<span class="c" style="left:10px">25</span>
<div class="th" style="left:100px"><svg viewBox="0 0 30 30"><g filter="url(#bl)"><rect x="-4" y="-4" width="38" height="38" fill="#2b2e36"/><rect x="16" y="-2" width="16" height="7" fill="#d4d8dc" /><rect x="24" y="4" width="8" height="18" fill="#6c7078" /><rect x="13" y="3" width="9" height="5" fill="#3a3e48" /><ellipse cx="6.5" cy="6" rx="5" ry="4.6" fill="#7fb23c" /><ellipse cx="9.5" cy="10" rx="3.5" ry="3" fill="#8aba44" /><ellipse cx="3.5" cy="4" rx="2.5" ry="2" fill="#98c850" /><ellipse cx="6" cy="8" rx="2" ry="1.5" fill="#4a6a28" /><path d="M9 11 5.500 21" fill="none" stroke="#a07c4c" stroke-width="1.1" stroke-linecap="round" /><rect x="-2" y="19" width="4.5" height="13" fill="#c8c8cc" /><ellipse cx="20" cy="17.5" rx="7" ry="8.4" fill="#dcb8a4" /><path d="M12.800 14C12 7.500 17 5.800 20.500 6 25 6.200 28 9.500 27.200 14.500 24 10.800 17 10.800 12.800 14z" fill="#453630" /><path d="M15 16.800h4M21.500 16.800h4" fill="none" stroke="#efe4de" stroke-width="0.7" stroke-linecap="round" /><ellipse cx="20" cy="22.3" rx="1.4" ry="0.55" fill="#c07878" /><path d="M-2 32V24.500C4 22 9 22 13 23 16 27.500 24 27.500 27 24 29 24 31 24.500 32 25.500V32z" fill="#292b2f" /><path d="M2 27 10 25.500M4 30 12 28" fill="none" stroke="#45474b" stroke-width="0.8" stroke-linecap="round" /></g><g opacity="0.4"><rect x="-4" y="-4" width="38" height="38" fill="#2b2e36"/><rect x="16" y="-2" width="16" height="7" fill="#d4d8dc" /><rect x="24" y="4" width="8" height="18" fill="#6c7078" /><rect x="13" y="3" width="9" height="5" fill="#3a3e48" /><ellipse cx="6.5" cy="6" rx="5" ry="4.6" fill="#7fb23c" /><ellipse cx="9.5" cy="10" rx="3.5" ry="3" fill="#8aba44" /><ellipse cx="3.5" cy="4" rx="2.5" ry="2" fill="#98c850" /><ellipse cx="6" cy="8" rx="2" ry="1.5" fill="#4a6a28" /><path d="M9 11 5.500 21" fill="none" stroke="#a07c4c" stroke-width="1.1" stroke-linecap="round" /><rect x="-2" y="19" width="4.5" height="13" fill="#c8c8cc" /><ellipse cx="20" cy="17.5" rx="7" ry="8.4" fill="#dcb8a4" /><path d="M12.800 14C12 7.500 17 5.800 20.500 6 25 6.200 28 9.500 27.200 14.500 24 10.800 17 10.800 12.800 14z" fill="#453630" /><path d="M15 16.800h4M21.500 16.800h4" fill="none" stroke="#efe4de" stroke-width="0.7" stroke-linecap="round" /><ellipse cx="20" cy="22.3" rx="1.4" ry="0.55" fill="#c07878" /><path d="M-2 32V24.500C4 22 9 22 13 23 16 27.500 24 27.500 27 24 29 24 31 24.500 32 25.500V32z" fill="#292b2f" /><path d="M2 27 10 25.500M4 30 12 28" fill="none" stroke="#45474b" stroke-width="0.8" stroke-linecap="round" /></g></svg></div>
<span class="c" style="left:160px">金鑫</span>
<div class="th" style="left:320px"><svg viewBox="0 0 30 30"><g filter="url(#bl)"><rect x="-4" y="-4" width="38" height="38" fill="#b9b9b9"/><rect x="24" y="-2" width="8" height="14" fill="#5b5d5f" /><rect x="-2" y="-2" width="10" height="6" fill="#c8c8c8" /><rect x="-2" y="14" width="5" height="5.5" fill="#d03222" /><rect x="28" y="12" width="4" height="6" fill="#c83828" /><ellipse cx="17" cy="13" rx="9" ry="9.2" fill="#d6ac9c" /><path d="M8 10C7 .5 28 .5 27 10.500 23 6.500 12 6.500 8 10z" fill="#18181a" /><path d="M11.500 12h4M18.500 12h4" fill="none" stroke="#4a3a36" stroke-width="0.8" stroke-linecap="round" /><ellipse cx="17" cy="18" rx="1.9" ry="0.7" fill="#b04858" /><path d="M-2 32V21C2 19.500 8 19.500 11 20 14 23 20 23 23 20 26 19 29 19 32 20V32z" fill="#111214" /></g><g opacity="0.4"><rect x="-4" y="-4" width="38" height="38" fill="#b9b9b9"/><rect x="24" y="-2" width="8" height="14" fill="#5b5d5f" /><rect x="-2" y="-2" width="10" height="6" fill="#c8c8c8" /><rect x="-2" y="14" width="5" height="5.5" fill="#d03222" /><rect x="28" y="12" width="4" height="6" fill="#c83828" /><ellipse cx="17" cy="13" rx="9" ry="9.2" fill="#d6ac9c" /><path d="M8 10C7 .5 28 .5 27 10.500 23 6.500 12 6.500 8 10z" fill="#18181a" /><path d="M11.500 12h4M18.500 12h4" fill="none" stroke="#4a3a36" stroke-width="0.8" stroke-linecap="round" /><ellipse cx="17" cy="18" rx="1.9" ry="0.7" fill="#b04858" /><path d="M-2 32V21C2 19.500 8 19.500 11 20 14 23 20 23 23 20 26 19 29 19 32 20V32z" fill="#111214" /></g></svg></div>
<span class="c" style="left:420px">1611</span><span class="c" style="left:720px">1611</span>
<span class="c url" style="left:1020px">https://wybshuzirenxm</span>
<span class="tag" style="left:1140px">已完成</span>
</div>
<div class="tr" style="top:520px">
<span class="c" style="left:10px">24</span>
<div class="th" style="left:100px"><svg viewBox="0 0 30 30"><g filter="url(#bl)"><rect x="-4" y="-4" width="38" height="38" fill="#2b2e36"/><rect x="16" y="-2" width="16" height="7" fill="#d4d8dc" /><rect x="24" y="4" width="8" height="18" fill="#6c7078" /><rect x="13" y="3" width="9" height="5" fill="#3a3e48" /><ellipse cx="6.5" cy="6" rx="5" ry="4.6" fill="#7fb23c" /><ellipse cx="9.5" cy="10" rx="3.5" ry="3" fill="#8aba44" /><ellipse cx="3.5" cy="4" rx="2.5" ry="2" fill="#98c850" /><ellipse cx="6" cy="8" rx="2" ry="1.5" fill="#4a6a28" /><path d="M9 11 5.500 21" fill="none" stroke="#a07c4c" stroke-width="1.1" stroke-linecap="round" /><rect x="-2" y="19" width="4.5" height="13" fill="#c8c8cc" /><ellipse cx="20" cy="17.5" rx="7" ry="8.4" fill="#dcb8a4" /><path d="M12.800 14C12 7.500 17 5.800 20.500 6 25 6.200 28 9.500 27.200 14.500 24 10.800 17 10.800 12.800 14z" fill="#453630" /><path d="M15 16.800h4M21.500 16.800h4" fill="none" stroke="#efe4de" stroke-width="0.7" stroke-linecap="round" /><ellipse cx="20" cy="22.3" rx="1.4" ry="0.55" fill="#c07878" /><path d="M-2 32V24.500C4 22 9 22 13 23 16 27.500 24 27.500 27 24 29 24 31 24.500 32 25.500V32z" fill="#292b2f" /><path d="M2 27 10 25.500M4 30 12 28" fill="none" stroke="#45474b" stroke-width="0.8" stroke-linecap="round" /></g><g opacity="0.4"><rect x="-4" y="-4" width="38" height="38" fill="#2b2e36"/><rect x="16" y="-2" width="16" height="7" fill="#d4d8dc" /><rect x="24" y="4" width="8" height="18" fill="#6c7078" /><rect x="13" y="3" width="9" height="5" fill="#3a3e48" /><ellipse cx="6.5" cy="6" rx="5" ry="4.6" fill="#7fb23c" /><ellipse cx="9.5" cy="10" rx="3.5" ry="3" fill="#8aba44" /><ellipse cx="3.5" cy="4" rx="2.5" ry="2" fill="#98c850" /><ellipse cx="6" cy="8" rx="2" ry="1.5" fill="#4a6a28" /><path d="M9 11 5.500 21" fill="none" stroke="#a07c4c" stroke-width="1.1" stroke-linecap="round" /><rect x="-2" y="19" width="4.5" height="13" fill="#c8c8cc" /><ellipse cx="20" cy="17.5" rx="7" ry="8.4" fill="#dcb8a4" /><path d="M12.800 14C12 7.500 17 5.800 20.500 6 25 6.200 28 9.500 27.200 14.500 24 10.800 17 10.800 12.800 14z" fill="#453630" /><path d="M15 16.800h4M21.500 16.800h4" fill="none" stroke="#efe4de" stroke-width="0.7" stroke-linecap="round" /><ellipse cx="20" cy="22.3" rx="1.4" ry="0.55" fill="#c07878" /><path d="M-2 32V24.500C4 22 9 22 13 23 16 27.500 24 27.500 27 24 29 24 31 24.500 32 25.500V32z" fill="#292b2f" /><path d="M2 27 10 25.500M4 30 12 28" fill="none" stroke="#45474b" stroke-width="0.8" stroke-linecap="round" /></g></svg></div>
<span class="c" style="left:160px">金鑫</span>
<div class="th" style="left:320px"><svg viewBox="0 0 30 30"><g filter="url(#bl)"><rect x="-4" y="-4" width="38" height="38" fill="#d9dddd"/><path d="M17 -2H32V32H22L19 24z" fill="#7b4b3b" /><path d="M21 22 32 20V32H22z" fill="#a88274" /><rect x="27" y="2" width="5" height="8" fill="#4a3028" /><path d="M8 4C11 2 17 2.500 19.500 6 21 10 21 18 19.500 22 16 25 10 24.500 8 22 5 18 5 8 8 4z" fill="#d9a999" /><path d="M8.500 3.500C5 3 4 8 5 13 5.500 10 7 6 10.500 4z" fill="#1a1818" /><path d="M8 2C11 1 15 1.500 17 3L12 4z" fill="#222" /><path d="M11 6.500v5M11 14v5" fill="none" stroke="#6a5a56" stroke-width="0.7" stroke-linecap="round" /><ellipse cx="17" cy="15.5" rx="0.7" ry="2" fill="#c04858" /></g><g opacity="0.4"><rect x="-4" y="-4" width="38" height="38" fill="#d9dddd"/><path d="M17 -2H32V32H22L19 24z" fill="#7b4b3b" /><path d="M21 22 32 20V32H22z" fill="#a88274" /><rect x="27" y="2" width="5" height="8" fill="#4a3028" /><path d="M8 4C11 2 17 2.500 19.500 6 21 10 21 18 19.500 22 16 25 10 24.500 8 22 5 18 5 8 8 4z" fill="#d9a999" /><path d="M8.500 3.500C5 3 4 8 5 13 5.500 10 7 6 10.500 4z" fill="#1a1818" /><path d="M8 2C11 1 15 1.500 17 3L12 4z" fill="#222" /><path d="M11 6.500v5M11 14v5" fill="none" stroke="#6a5a56" stroke-width="0.7" stroke-linecap="round" /><ellipse cx="17" cy="15.5" rx="0.7" ry="2" fill="#c04858" /></g></svg></div>
<span class="c" style="left:420px">1601</span><span class="c" style="left:720px">1601</span>
<span class="c url" style="left:1020px">https://wybshuzirenxm</span>
<span class="tag" style="left:1140px">已完成</span>
</div>
<div class="tr" style="top:560px">
<span class="c" style="left:10px">23</span>
<div class="th" style="left:100px"><svg viewBox="0 0 30 30"><g filter="url(#bl)"><rect x="-4" y="-4" width="38" height="38" fill="#8b8b89"/><rect x="-2" y="-2" width="34" height="8" fill="#dadcdc" /><rect x="-2" y="2" width="7" height="9" fill="#adadad" /><rect x="5" y="2.5" width="9.5" height="4" fill="#c2c2c0" /><rect x="15.5" y="-2" width="2" height="8" fill="#6b4b41" /><path d="M19 4 24 3 32 2.500V12H21z" fill="#3e3e3c" /><rect x="26" y="3" width="6" height="7.5" fill="#3a2628" /><rect x="-2" y="27.5" width="34" height="5" fill="#6e6e6c" /><rect x="-2" y="10" width="5" height="18" fill="#969694" /><path d="M6 10.500 7.800 6.300C9 5.600 16 5.300 17.500 5.600L22 9.300 27.500 12.300C29 14 29.500 17 29.200 21L27.500 25 22 26.500H9L5 25.500 3.300 21C3 17 3.500 13.500 4.500 11.500z" fill="#0a0e13" /><path d="M6.500 11.500C12 10 19 10 24.500 11.500L25 12.800C19 11.500 12 11.500 6.300 13z" fill="#1c242b" /><path d="M4.800 16 10.600 17.200 10.300 19.200 5 18.600z" fill="#e4e8e8" /><ellipse cx="18.4" cy="16.8" rx="0.7" ry="0.9" fill="#c0c8c8" /><path d="M12 21h6.500" fill="none" stroke="#5a6468" stroke-width="0.7" stroke-linecap="round" /><path d="M24 17.500 27.500 16.800" fill="none" stroke="#3a4448" stroke-width="0.8" stroke-linecap="round" /></g><g opacity="0.4"><rect x="-4" y="-4" width="38" height="38" fill="#8b8b89"/><rect x="-2" y="-2" width="34" height="8" fill="#dadcdc" /><rect x="-2" y="2" width="7" height="9" fill="#adadad" /><rect x="5" y="2.5" width="9.5" height="4" fill="#c2c2c0" /><rect x="15.5" y="-2" width="2" height="8" fill="#6b4b41" /><path d="M19 4 24 3 32 2.500V12H21z" fill="#3e3e3c" /><rect x="26" y="3" width="6" height="7.5" fill="#3a2628" /><rect x="-2" y="27.5" width="34" height="5" fill="#6e6e6c" /><rect x="-2" y="10" width="5" height="18" fill="#969694" /><path d="M6 10.500 7.800 6.300C9 5.600 16 5.300 17.500 5.600L22 9.300 27.500 12.300C29 14 29.500 17 29.200 21L27.500 25 22 26.500H9L5 25.500 3.300 21C3 17 3.500 13.500 4.500 11.500z" fill="#0a0e13" /><path d="M6.500 11.500C12 10 19 10 24.500 11.500L25 12.800C19 11.500 12 11.500 6.300 13z" fill="#1c242b" /><path d="M4.800 16 10.600 17.200 10.300 19.200 5 18.600z" fill="#e4e8e8" /><ellipse cx="18.4" cy="16.8" rx="0.7" ry="0.9" fill="#c0c8c8" /><path d="M12 21h6.500" fill="none" stroke="#5a6468" stroke-width="0.7" stroke-linecap="round" /><path d="M24 17.500 27.500 16.800" fill="none" stroke="#3a4448" stroke-width="0.8" stroke-linecap="round" /></g></svg></div>
<span class="c" style="left:160px">上进青年▯</span>
<div class="th" style="left:320px"><svg viewBox="0 0 30 30"><g filter="url(#bl)"><rect x="-4" y="-4" width="38" height="38" fill="#6b6f73"/><rect x="-2" y="-2" width="34" height="9.5" fill="#a9adb1" /><rect x="8" y="1" width="8" height="1.5" fill="#f4f4f4" /><rect x="2" y="4.5" width="10" height="1.2" fill="#dcdcdc" /><rect x="18" y="3" width="12" height="1.2" fill="#d0d0d0" /><rect x="-2" y="7" width="34" height="2" fill="#d8d8d4" /><rect x="-2" y="13" width="8" height="6" fill="#3a8a3c" /><rect x="24" y="13" width="8" height="4" fill="#4a4a4e" /><rect x="-2" y="23" width="5" height="9" fill="#c97939" /><rect x="26" y="23" width="6" height="9" fill="#c97939" /><ellipse cx="16" cy="12.5" rx="4.2" ry="4.5" fill="#c89878" /><path d="M11.800 11C11.800 7 20.200 7 20.200 11 18 9.500 14 9.500 11.800 11z" fill="#151515" /><path d="M1 32V20C3 16.500 9 15.500 12.500 15.500L16 17 19.500 15.500C23 15.500 28 16.500 29.500 20V32z" fill="#0c0c0e" /><rect x="19" y="21" width="4" height="1.6" fill="#e0e0e0" /></g><g opacity="0.4"><rect x="-4" y="-4" width="38" height="38" fill="#6b6f73"/><rect x="-2" y="-2" width="34" height="9.5" fill="#a9adb1" /><rect x="8" y="1" width="8" height="1.5" fill="#f4f4f4" /><rect x="2" y="4.5" width="10" height="1.2" fill="#dcdcdc" /><rect x="18" y="3" width="12" height="1.2" fill="#d0d0d0" /><rect x="-2" y="7" width="34" height="2" fill="#d8d8d4" /><rect x="-2" y="13" width="8" height="6" fill="#3a8a3c" /><rect x="24" y="13" width="8" height="4" fill="#4a4a4e" /><rect x="-2" y="23" width="5" height="9" fill="#c97939" /><rect x="26" y="23" width="6" height="9" fill="#c97939" /><ellipse cx="16" cy="12.5" rx="4.2" ry="4.5" fill="#c89878" /><path d="M11.800 11C11.800 7 20.200 7 20.200 11 18 9.500 14 9.500 11.800 11z" fill="#151515" /><path d="M1 32V20C3 16.500 9 15.500 12.500 15.500L16 17 19.500 15.500C23 15.500 28 16.500 29.500 20V32z" fill="#0c0c0e" /><rect x="19" y="21" width="4" height="1.6" fill="#e0e0e0" /></g></svg></div>
<span class="c" style="left:420px">1532</span><span class="c" style="left:720px">1532</span>
<span class="c url" style="left:1020px">https://wybshuzirenxm</span>
<span class="tag" style="left:1140px">已完成</span>
</div>
<div class="tr" style="top:600px">
<span class="c" style="left:10px">22</span>
<div class="th" style="left:100px"><svg viewBox="0 0 30 30"><g filter="url(#bl)"><rect x="-4" y="-4" width="38" height="38" fill="#ffffff"/><path d="M10.800 9 17 15M18.200 9 10.800 16" fill="none" stroke="#1f8fe8" stroke-width="2" stroke-linecap="round" /><ellipse cx="10.5" cy="8.7" rx="1.9" ry="1.9" fill="#1f8fe8" /><ellipse cx="18.5" cy="8.7" rx="1.9" ry="1.9" fill="#1f8fe8" /><ellipse cx="10.5" cy="16.3" rx="1.9" ry="1.9" fill="#1f8fe8" /><ellipse cx="17.3" cy="14.6" rx="2.9" ry="2.9" fill="#f8e01c" /><rect x="9" y="21.2" width="12" height="1.1" fill="#3a3a3a" /><rect x="3" y="23.7" width="24" height="0.8" fill="#9a9a9a" /></g><g opacity="0.75"><rect x="-4" y="-4" width="38" height="38" fill="#ffffff"/><path d="M10.800 9 17 15M18.200 9 10.800 16" fill="none" stroke="#1f8fe8" stroke-width="2" stroke-linecap="round" /><ellipse cx="10.5" cy="8.7" rx="1.9" ry="1.9" fill="#1f8fe8" /><ellipse cx="18.5" cy="8.7" rx="1.9" ry="1.9" fill="#1f8fe8" /><ellipse cx="10.5" cy="16.3" rx="1.9" ry="1.9" fill="#1f8fe8" /><ellipse cx="17.3" cy="14.6" rx="2.9" ry="2.9" fill="#f8e01c" /><rect x="9" y="21.2" width="12" height="1.1" fill="#3a3a3a" /><rect x="3" y="23.7" width="24" height="0.8" fill="#9a9a9a" /></g></svg></div>
<span class="c" style="left:160px">软件开发商-大...</span>
<div class="th" style="left:320px"><svg viewBox="0 0 30 30"><g filter="url(#bl)"><rect x="-4" y="-4" width="38" height="38" fill="#c9d1d1"/><rect x="-2" y="-2" width="34" height="6" fill="#d6dede" /><ellipse cx="28" cy="7" rx="3" ry="3.5" fill="#e889b1" /><rect x="-2" y="12" width="10" height="11" fill="#9b9f9b" /><rect x="22" y="10" width="10" height="12" fill="#a4a8a4" /><ellipse cx="14.5" cy="16" rx="8.5" ry="8.2" fill="#d0a898" /><path d="M7 13C6 4.500 25 4.500 24 13 20 9.500 11 9.500 7 13z" fill="#141416" /><path d="M10 14.500h3.600M16 14.500h3.600" fill="none" stroke="#5a4a46" stroke-width="0.8" stroke-linecap="round" /><ellipse cx="14.5" cy="20.3" rx="1.8" ry="0.7" fill="#b05060" /><path d="M-2 32V24C3 21.500 8 22.500 10 23.500 13 25.500 17 25.500 20 23 24 21.500 28 21.500 32 22V32z" fill="#161c1c" /></g><g opacity="0.4"><rect x="-4" y="-4" width="38" height="38" fill="#c9d1d1"/><rect x="-2" y="-2" width="34" height="6" fill="#d6dede" /><ellipse cx="28" cy="7" rx="3" ry="3.5" fill="#e889b1" /><rect x="-2" y="12" width="10" height="11" fill="#9b9f9b" /><rect x="22" y="10" width="10" height="12" fill="#a4a8a4" /><ellipse cx="14.5" cy="16" rx="8.5" ry="8.2" fill="#d0a898" /><path d="M7 13C6 4.500 25 4.500 24 13 20 9.500 11 9.500 7 13z" fill="#141416" /><path d="M10 14.500h3.600M16 14.500h3.600" fill="none" stroke="#5a4a46" stroke-width="0.8" stroke-linecap="round" /><ellipse cx="14.5" cy="20.3" rx="1.8" ry="0.7" fill="#b05060" /><path d="M-2 32V24C3 21.500 8 22.500 10 23.500 13 25.500 17 25.500 20 23 24 21.500 28 21.500 32 22V32z" fill="#161c1c" /></g></svg></div>
<span class="c" style="left:420px">1527</span><span class="c" style="left:720px">1527</span>
<span class="c url" style="left:1020px">https://wybshuzirenxm</span>
<span class="tag" style="left:1140px">已完成</span>
</div>
<div class="tr" style="top:640px">
<div class="th" style="left:320px"><svg viewBox="0 0 30 30"><defs><linearGradient id="g16" x1="0" x2="1" y1="0" y2="0"><stop offset="0" stop-color="#8a86c8"/><stop offset=".35" stop-color="#b070c8"/><stop offset=".6" stop-color="#f070c0"/><stop offset="1" stop-color="#e8b8d8"/></linearGradient></defs><rect x="-4" y="-4" width="38" height="38" fill="url(#g16)"/></svg></div>
</div>
</div>
<div class="fix"><div class="fhead">操作</div>
<div class="fr" style="top:40px"><span>删除</span></div>
<div class="fr" style="top:80px"><span>删除</span></div>
<div class="fr" style="top:120px"><span>删除</span></div>
<div class="fr" style="top:160px"><span>删除</span></div>
<div class="fr" style="top:200px"><span>删除</span></div>
<div class="fr" style="top:240px"><span>删除</span></div>
<div class="fr" style="top:280px"><span>删除</span></div>
<div class="fr" style="top:320px"><span>删除</span></div>
<div class="fr" style="top:360px"><span>删除</span></div>
<div class="fr" style="top:400px"><span>删除</span></div>
<div class="fr" style="top:440px"><span>删除</span></div>
<div class="fr" style="top:480px"><span>删除</span></div>
<div class="fr" style="top:520px"><span>删除</span></div>
<div class="fr" style="top:560px"><span>删除</span></div>
<div class="fr" style="top:600px"><span>删除</span></div>
<div class="fr" style="top:640px"></div>
</div>
<div class="vbar"></div>
<div class="hbar"><i></i></div>
<div class="pager">
<span class="pg ico" style="left:1132px"><svg viewBox="0 0 14 14" fill="none" stroke-width="1.150"><path d="M7 1.500 1.500 7 7 12.500M12.500 1.500 7 7l5.500 5.500"/></svg></span>
<span class="pg ico" style="left:1166px"><svg viewBox="0 0 14 14" fill="none" stroke-width="1.150"><path d="M9.500 1.500 4 7l5.500 5.500"/></svg></span>
<span class="pg cur" style="left:1201px">1</span>
<span class="pg" style="left:1235px">2</span>
<span class="pg ico dk" style="left:1270px"><svg viewBox="0 0 14 14" fill="none" stroke-width="1.150"><path d="M4.500 1.500 10 7l-5.500 5.500"/></svg></span>
<span class="pg ico dk" style="left:1304px"><svg viewBox="0 0 14 14" fill="none" stroke-width="1.150"><path d="M1.500 1.500 7 7l-5.500 5.500M7 1.500 12.500 7 7 12.500"/></svg></span>
<div class="sel" style="left:1335px"><span>20条/页</span><b></b></div>
<span class="pt" style="left:1436px">前往</span>
<div class="jump" style="left:1465px">1</div>
<span class="pt" style="left:1511px">页</span>
<span class="pt" style="left:1534px;top:6px">共 36 条记录</span>
</div>
</div>
</body></html>
